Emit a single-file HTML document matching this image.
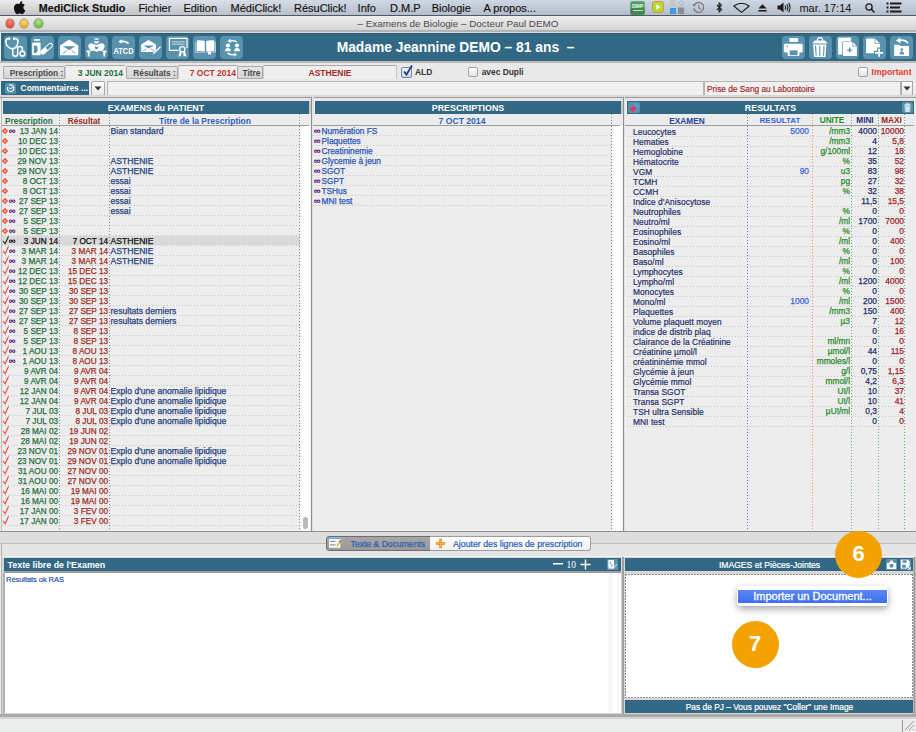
<!DOCTYPE html><html><head><meta charset="utf-8"><style>
*{margin:0;padding:0;box-sizing:border-box}
html,body{width:916px;height:732px;overflow:hidden}
body{position:relative;background:#ececec;font-family:"Liberation Sans",sans-serif;color:#000}
div{position:absolute;white-space:pre}
.t{-webkit-text-stroke:0.25px currentColor}
svg{position:absolute;overflow:visible}
</style></head><body><div style="left:0px;top:0px;width:916px;height:15px;background:linear-gradient(90deg,rgba(140,170,210,0) 0,rgba(140,170,210,0.1) 150px,rgba(140,170,210,0.3) 350px,rgba(140,170,210,0.32) 100%),linear-gradient(#ececec,#c6c6c6)"></div>
<div style="left:0px;top:15px;width:916px;height:1px;background:#505a66"></div>
<svg style="left:14px;top:1px" width="12" height="13" viewBox="0 0 12 13"><path d="M8.3 0.3c0.1 0.9-0.3 1.8-0.8 2.4-0.5 0.6-1.4 1.1-2.2 1-0.1-0.9 0.3-1.8 0.8-2.3 0.5-0.6 1.4-1.1 2.2-1.1zM11.3 9.4c-0.3 0.8-0.5 1.1-0.9 1.8-0.6 0.9-1.4 2-2.4 2-0.9 0-1.1-0.6-2.3-0.6-1.2 0-1.5 0.6-2.3 0.6-1 0-1.8-1-2.3-1.9C-0.3 8.800-0.4 6 0.6 4.5c0.7-1.1 1.800-1.700 2.800-1.700 1 0 1.700 0.600 2.500 0.600 0.800 0 1.300-0.600 2.500-0.600 0.900 0 1.800 0.500 2.500 1.300-2.200 1.200-1.800 4.300 0.400 5.300z" fill="#111"/></svg>
<div style="left:38.8px;top:0.5px;height:15px;line-height:15px;font-size:10.75px;font-weight:bold;color:#111;-webkit-text-stroke:0.15px #111">MediClick Studio</div>
<div style="left:138.4px;top:0.5px;height:15px;line-height:15px;font-size:11px;color:#111;-webkit-text-stroke:0.15px #111">Fichier</div>
<div style="left:183.4px;top:0.5px;height:15px;line-height:15px;font-size:11px;color:#111;-webkit-text-stroke:0.15px #111">Edition</div>
<div style="left:230.6px;top:0.5px;height:15px;line-height:15px;font-size:11px;color:#111;-webkit-text-stroke:0.15px #111">MédiClick!</div>
<div style="left:294px;top:0.5px;height:15px;line-height:15px;font-size:11px;color:#111;-webkit-text-stroke:0.15px #111">RésuClick!</div>
<div style="left:357.6px;top:0.5px;height:15px;line-height:15px;font-size:11px;color:#111;-webkit-text-stroke:0.15px #111">Info</div>
<div style="left:390px;top:0.5px;height:15px;line-height:15px;font-size:11px;color:#111;-webkit-text-stroke:0.15px #111">D.M.P</div>
<div style="left:431.7px;top:0.5px;height:15px;line-height:15px;font-size:11px;color:#111;-webkit-text-stroke:0.15px #111">Biologie</div>
<div style="left:483.4px;top:0.5px;height:15px;line-height:15px;font-size:11px;color:#111;-webkit-text-stroke:0.15px #111">A propos...</div>
<div style="left:799.4px;top:0.5px;height:15px;line-height:15px;font-size:11px;color:#111">mar. 17:14</div>
<div style="left:0px;top:16px;width:916px;height:17px;background:linear-gradient(#eeeeee,#d0d0d0)"></div>
<div style="left:0px;top:30px;width:916px;height:2px;background:#b4b4b4"></div>
<div style="left:0px;top:32px;width:916px;height:1px;background:#dadada"></div>
<div style="left:5.8px;top:19.3px;width:8.4px;height:8.4px;border-radius:50%;background:radial-gradient(circle at 50% 35%,#ff8a80,#d22a1f);box-shadow:0 0 0 0.5px #7a7a7a"></div>
<div style="left:20.1px;top:19.3px;width:8.4px;height:8.4px;border-radius:50%;background:radial-gradient(circle at 50% 35%,#ffd87a,#d99414);box-shadow:0 0 0 0.5px #7a7a7a"></div>
<div style="left:34.3px;top:19.3px;width:8.4px;height:8.4px;border-radius:50%;background:radial-gradient(circle at 50% 35%,#b6e88a,#4e9e26);box-shadow:0 0 0 0.5px #7a7a7a"></div>
<div style="left:357.6px;top:16px;height:16px;line-height:16px;font-size:9.85px;color:#4a4a4a">– Examens de Biologie – Docteur Paul DEMO</div>
<div style="left:0px;top:33px;width:916px;height:29px;background:#326883"></div>
<div style="left:0px;top:33px;width:1px;height:29px;background:#f0f0f0"></div>
<div style="left:1px;top:33px;width:915px;height:1px;background:#2c5d75"></div>
<div style="left:0px;top:61px;width:916px;height:2px;background:#b9b9b9"></div>
<div style="left:4px;top:36px;width:23px;height:23px;background:#5892ad;border-radius:4px"></div>
<div style="left:31px;top:36px;width:23px;height:23px;background:#5892ad;border-radius:4px"></div>
<div style="left:58px;top:36px;width:23px;height:23px;background:#5892ad;border-radius:4px"></div>
<div style="left:85px;top:36px;width:23px;height:23px;background:#5892ad;border-radius:4px"></div>
<div style="left:112px;top:36px;width:23px;height:23px;background:#5892ad;border-radius:4px"></div>
<div style="left:139px;top:36px;width:23px;height:23px;background:#5892ad;border-radius:4px"></div>
<div style="left:166px;top:36px;width:23px;height:23px;background:#5892ad;border-radius:4px"></div>
<div style="left:193px;top:36px;width:23px;height:23px;background:#5892ad;border-radius:4px"></div>
<div style="left:220px;top:36px;width:23px;height:23px;background:#5892ad;border-radius:4px"></div>
<div style="left:782px;top:36px;width:23px;height:23px;background:#5892ad;border-radius:4px"></div>
<div style="left:809px;top:36px;width:23px;height:23px;background:#5892ad;border-radius:4px"></div>
<div style="left:836px;top:36px;width:23px;height:23px;background:#5892ad;border-radius:4px"></div>
<div style="left:863px;top:36px;width:23px;height:23px;background:#5892ad;border-radius:4px"></div>
<div style="left:890px;top:36px;width:23px;height:23px;background:#5892ad;border-radius:4px"></div>
<div style="left:336.7px;top:33.5px;height:28px;line-height:28px;font-size:13.8px;font-weight:bold;color:#fff">Madame Jeannine DEMO – 81 ans  –</div>
<div style="left:0px;top:63px;width:916px;height:17px;background:#e9e9e9"></div>
<div style="left:3px;top:66px;width:62px;height:13px;background:linear-gradient(#e6e6e6,#d3d3d3);border:1px solid #a9a9a9;border-radius:1px"></div>
<div style="left:3px;top:67px;width:62px;height:13px;line-height:13px;text-align:center;font-size:8.3px;font-weight:bold;color:#4a4a4a;padding-left:5px">Prescription :</div>
<div style="left:65px;top:65px;width:60px;height:14px;background:#efefef;border-top:1px solid #a9a9a9;border-left:1px solid #cfcfcf"></div>
<div style="left:65px;top:66px;width:60px;height:14px;line-height:14px;text-align:right;font-size:8.5px;font-weight:bold;color:#23703c;padding-right:2px">3 JUN 2014</div>
<div style="left:126px;top:66px;width:52px;height:13px;background:linear-gradient(#e6e6e6,#d3d3d3);border:1px solid #a9a9a9;border-radius:1px"></div>
<div style="left:126px;top:67px;width:52px;height:13px;line-height:13px;text-align:center;font-size:8.3px;font-weight:bold;color:#4a4a4a;padding-left:5px">Résultats :</div>
<div style="left:178px;top:65px;width:59px;height:14px;background:#efefef;border-top:1px solid #a9a9a9;border-left:1px solid #cfcfcf"></div>
<div style="left:178px;top:66px;width:59px;height:14px;line-height:14px;text-align:right;font-size:8.5px;font-weight:bold;color:#c0302a;padding-right:1px">7 OCT 2014</div>
<div style="left:237px;top:66px;width:26px;height:13px;background:linear-gradient(#e6e6e6,#d3d3d3);border:1px solid #a9a9a9;border-radius:1px"></div>
<div style="left:237px;top:67px;width:26px;height:13px;line-height:13px;text-align:center;font-size:8.3px;font-weight:bold;color:#4a4a4a;padding-left:3px">Titre</div>
<div style="left:263px;top:65px;width:134px;height:14px;background:#efefef;border-top:1px solid #a9a9a9;border-left:1px solid #cfcfcf"></div>
<div style="left:263px;top:66px;width:134px;height:14px;line-height:14px;text-align:center;font-size:8.5px;font-weight:bold;color:#a52a1f;padding-right:0px">ASTHENIE</div>
<div style="left:396px;top:65px;width:1px;height:14px;background:#c4c4c4"></div>
<div style="left:401px;top:67px;width:11px;height:11px;background:linear-gradient(#f4f8fc,#c5d6e8);border:1px solid #6f88a8;border-radius:2px"></div>
<svg style="left:402px;top:64px" width="11" height="13" viewBox="0 0 11 13"><path d="M2 7.5 L4.5 10.5 L10 1.5" stroke="#1d3f7a" stroke-width="1.8" fill="none"/></svg>
<div style="left:415px;top:66px;height:14px;line-height:14px;font-size:8.4px;transform:translateY(-0.6px);font-weight:bold;color:#333">ALD</div>
<div style="left:468px;top:67px;width:10px;height:10px;background:linear-gradient(#fff,#e3e3e3);border:1px solid #a0a0a0;border-radius:2px"></div>
<div style="left:481.7px;top:66px;height:14px;line-height:14px;font-size:8.4px;transform:translateY(-0.6px);font-weight:bold;color:#333">avec Dupli</div>
<div style="left:858px;top:67px;width:10px;height:10px;background:linear-gradient(#fff,#e3e3e3);border:1px solid #a0a0a0;border-radius:2px"></div>
<div style="left:871.5px;top:66px;height:14px;line-height:14px;font-size:8.7px;transform:translateY(-0.6px);font-weight:bold;color:#ea3a2e">Important</div>
<div style="left:0px;top:80px;width:916px;height:17px;background:#ececec"></div>
<div style="left:1px;top:81px;width:88px;height:14px;background:#326883"></div>
<div style="left:5px;top:83px;width:11px;height:11px;background:#5892ad;border-radius:2px"></div>
<svg style="left:6px;top:84px" width="9" height="9" viewBox="0 0 9 9"><path d="M1.5 3 A3.3 3.3 0 1 0 3 1.3" stroke="#fff" stroke-width="1.1" fill="none"/><path d="M3 3.5 L4.5 5 L6.5 3" stroke="#fff" stroke-width="1" fill="none"/></svg>
<div style="left:20.6px;top:81px;height:15px;line-height:15px;font-size:8.4px;font-weight:bold;color:#fff">Commentaires ...</div>
<div style="left:91px;top:81px;width:14px;height:15px;background:linear-gradient(#fff,#e8e8e8);border:1px solid #a8a8a8;border-radius:2px"></div>
<svg style="left:94px;top:86px" width="8" height="5" viewBox="0 0 8 5"><path d="M0.5 0.5 L7.5 0.5 L4 4.5z" fill="#333"/></svg>
<div style="left:107px;top:81px;width:597px;height:15px;background:#f0f0f0;border:1px solid #b5b5b5;border-bottom-color:#dcdcdc"></div>
<div style="left:704px;top:81px;width:197px;height:15px;background:#f0f0f0;border:1px solid #b5b5b5;border-bottom-color:#dcdcdc"></div>
<div style="left:707px;top:82px;height:15px;line-height:15px;font-size:8.3px;color:#a2231d;-webkit-text-stroke:0.15px #a2231d">Prise de Sang au Laboratoire</div>
<div style="left:901px;top:81px;width:12px;height:15px;background:linear-gradient(#fff,#e8e8e8);border:1px solid #a8a8a8"></div>
<svg style="left:903px;top:86px" width="8" height="5" viewBox="0 0 8 5"><path d="M0.5 0.5 L7.5 0.5 L4 4.5z" fill="#333"/></svg>
<div style="left:0px;top:95px;width:916px;height:2px;background:#d8d8d8"></div>
<div style="left:0px;top:97px;width:916px;height:1px;background:#9c9c9c"></div>
<div style="left:0px;top:98px;width:916px;height:3px;background:#e6e6e6"></div>
<div style="left:311px;top:97px;width:1px;height:434px;background:#8e8e8e"></div>
<div style="left:312px;top:97px;width:2px;height:434px;background:#e0e0e0"></div>
<div style="left:623px;top:97px;width:1px;height:434px;background:#8e8e8e"></div>
<div style="left:624px;top:97px;width:1px;height:434px;background:#e0e0e0"></div>
<div style="left:309px;top:101px;width:2px;height:13px;background:#c9c9c9"></div>
<div style="left:621px;top:101px;width:2px;height:13px;background:#c9c9c9"></div>
<div style="left:1px;top:98px;width:1px;height:433px;background:#bcbcbc"></div>
<div style="left:0px;top:531px;width:916px;height:1px;background:#8f8f8f"></div>
<div style="left:3px;top:101px;width:306px;height:13px;background:#326883"></div>
<div style="left:3px;top:102px;width:306px;height:13px;line-height:13px;text-align:center;font-size:8.9px;font-weight:bold;color:#fff">EXAMENS du PATIENT</div>
<div style="left:2px;top:114px;width:307px;height:12px;background:#ececec;border-bottom:1px solid #9c9c9c"></div>
<div style="left:5px;top:116px;height:12px;line-height:12px;font-size:8.2px;font-weight:bold;color:#23703c">Prescription</div>
<div style="left:59px;top:116px;width:50px;height:12px;line-height:12px;text-align:center;font-size:8.25px;font-weight:bold;color:#9a2b22">Résultat</div>
<div style="left:110px;top:115.4px;width:190px;height:12px;line-height:12px;text-align:center;font-size:8.5px;font-weight:bold;color:#2f5fbf">Titre de la Prescription</div>
<div style="left:2px;top:126px;width:298px;height:405px;background:#ededed"></div>
<div style="left:300px;top:126px;width:11px;height:405px;background:linear-gradient(90deg,#f3f3f3,#fff 35%,#fff 80%,#f0f0f0)"></div>
<div style="left:303px;top:517px;width:5px;height:12px;background:#b9b9b9;border-radius:3px"></div>
<div style="left:2px;top:135px;width:298px;height:1px;background:repeating-linear-gradient(90deg,#c4c4c4 0 1px,transparent 1px 3px)"></div>
<svg style="left:2.3px;top:128.4px" width="6" height="6" viewBox="0 0 6 6"><path d="M3 0.9 L5.1 3 L3 5.1 L0.9 3z" stroke="#f0583c" stroke-width="1.5" fill="none"/></svg>
<svg style="left:9px;top:129px" width="8" height="5" viewBox="0 0 8 5"><path d="M3.2 2.2 C2.2 0.6 0.5 0.7 0.5 2.2 C0.5 3.7 2.2 3.8 3.2 2.2 C4.2 0.6 5.9 0.7 5.9 2.2 C5.9 3.7 4.2 3.8 3.2 2.2z" stroke="#5e3585" stroke-width="1.15" fill="none"/></svg>
<div style="left:5px;top:127px;width:53px;height:10px;line-height:10px;text-align:right;font-size:8.2px;color:#23703c;-webkit-text-stroke:0.25px #23703c">13 JAN 14</div>
<div style="left:110.5px;top:126.4px;height:10px;line-height:10px;font-size:8.6px;color:#24407e;-webkit-text-stroke:0.25px #24407e">Bian standard</div>
<div style="left:2px;top:145px;width:298px;height:1px;background:repeating-linear-gradient(90deg,#c4c4c4 0 1px,transparent 1px 3px)"></div>
<svg style="left:2.3px;top:138.4px" width="6" height="6" viewBox="0 0 6 6"><path d="M3 0.9 L5.1 3 L3 5.1 L0.9 3z" stroke="#f0583c" stroke-width="1.5" fill="none"/></svg>
<div style="left:5px;top:137px;width:53px;height:10px;line-height:10px;text-align:right;font-size:8.2px;color:#23703c;-webkit-text-stroke:0.25px #23703c">10 DEC 13</div>
<div style="left:2px;top:155px;width:298px;height:1px;background:repeating-linear-gradient(90deg,#c4c4c4 0 1px,transparent 1px 3px)"></div>
<svg style="left:2.3px;top:148.4px" width="6" height="6" viewBox="0 0 6 6"><path d="M3 0.9 L5.1 3 L3 5.1 L0.9 3z" stroke="#f0583c" stroke-width="1.5" fill="none"/></svg>
<div style="left:5px;top:147px;width:53px;height:10px;line-height:10px;text-align:right;font-size:8.2px;color:#23703c;-webkit-text-stroke:0.25px #23703c">10 DEC 13</div>
<div style="left:2px;top:165px;width:298px;height:1px;background:repeating-linear-gradient(90deg,#c4c4c4 0 1px,transparent 1px 3px)"></div>
<svg style="left:2.3px;top:158.4px" width="6" height="6" viewBox="0 0 6 6"><path d="M3 0.9 L5.1 3 L3 5.1 L0.9 3z" stroke="#f0583c" stroke-width="1.5" fill="none"/></svg>
<div style="left:5px;top:157px;width:53px;height:10px;line-height:10px;text-align:right;font-size:8.2px;color:#23703c;-webkit-text-stroke:0.25px #23703c">29 NOV 13</div>
<div style="left:110.5px;top:156.4px;height:10px;line-height:10px;font-size:8.6px;color:#24407e;-webkit-text-stroke:0.25px #24407e">ASTHENIE</div>
<div style="left:2px;top:175px;width:298px;height:1px;background:repeating-linear-gradient(90deg,#c4c4c4 0 1px,transparent 1px 3px)"></div>
<svg style="left:2.3px;top:168.4px" width="6" height="6" viewBox="0 0 6 6"><path d="M3 0.9 L5.1 3 L3 5.1 L0.9 3z" stroke="#f0583c" stroke-width="1.5" fill="none"/></svg>
<div style="left:5px;top:167px;width:53px;height:10px;line-height:10px;text-align:right;font-size:8.2px;color:#23703c;-webkit-text-stroke:0.25px #23703c">29 NOV 13</div>
<div style="left:110.5px;top:166.4px;height:10px;line-height:10px;font-size:8.6px;color:#24407e;-webkit-text-stroke:0.25px #24407e">ASTHENIE</div>
<div style="left:2px;top:185px;width:298px;height:1px;background:repeating-linear-gradient(90deg,#c4c4c4 0 1px,transparent 1px 3px)"></div>
<svg style="left:2.3px;top:178.4px" width="6" height="6" viewBox="0 0 6 6"><path d="M3 0.9 L5.1 3 L3 5.1 L0.9 3z" stroke="#f0583c" stroke-width="1.5" fill="none"/></svg>
<div style="left:5px;top:177px;width:53px;height:10px;line-height:10px;text-align:right;font-size:8.2px;color:#23703c;-webkit-text-stroke:0.25px #23703c">8 OCT 13</div>
<div style="left:110.5px;top:176.4px;height:10px;line-height:10px;font-size:8.6px;color:#24407e;-webkit-text-stroke:0.25px #24407e">essai</div>
<div style="left:2px;top:195px;width:298px;height:1px;background:repeating-linear-gradient(90deg,#c4c4c4 0 1px,transparent 1px 3px)"></div>
<svg style="left:2.3px;top:188.4px" width="6" height="6" viewBox="0 0 6 6"><path d="M3 0.9 L5.1 3 L3 5.1 L0.9 3z" stroke="#f0583c" stroke-width="1.5" fill="none"/></svg>
<div style="left:5px;top:187px;width:53px;height:10px;line-height:10px;text-align:right;font-size:8.2px;color:#23703c;-webkit-text-stroke:0.25px #23703c">8 OCT 13</div>
<div style="left:110.5px;top:186.4px;height:10px;line-height:10px;font-size:8.6px;color:#24407e;-webkit-text-stroke:0.25px #24407e">essai</div>
<div style="left:2px;top:205px;width:298px;height:1px;background:repeating-linear-gradient(90deg,#c4c4c4 0 1px,transparent 1px 3px)"></div>
<svg style="left:2.3px;top:198.4px" width="6" height="6" viewBox="0 0 6 6"><path d="M3 0.9 L5.1 3 L3 5.1 L0.9 3z" stroke="#f0583c" stroke-width="1.5" fill="none"/></svg>
<svg style="left:9px;top:199px" width="8" height="5" viewBox="0 0 8 5"><path d="M3.2 2.2 C2.2 0.6 0.5 0.7 0.5 2.2 C0.5 3.7 2.2 3.8 3.2 2.2 C4.2 0.6 5.9 0.7 5.9 2.2 C5.9 3.7 4.2 3.8 3.2 2.2z" stroke="#5e3585" stroke-width="1.15" fill="none"/></svg>
<div style="left:5px;top:197px;width:53px;height:10px;line-height:10px;text-align:right;font-size:8.2px;color:#23703c;-webkit-text-stroke:0.25px #23703c">27 SEP 13</div>
<div style="left:110.5px;top:196.4px;height:10px;line-height:10px;font-size:8.6px;color:#24407e;-webkit-text-stroke:0.25px #24407e">essai</div>
<div style="left:2px;top:215px;width:298px;height:1px;background:repeating-linear-gradient(90deg,#c4c4c4 0 1px,transparent 1px 3px)"></div>
<svg style="left:2.3px;top:208.4px" width="6" height="6" viewBox="0 0 6 6"><path d="M3 0.9 L5.1 3 L3 5.1 L0.9 3z" stroke="#f0583c" stroke-width="1.5" fill="none"/></svg>
<svg style="left:9px;top:209px" width="8" height="5" viewBox="0 0 8 5"><path d="M3.2 2.2 C2.2 0.6 0.5 0.7 0.5 2.2 C0.5 3.7 2.2 3.8 3.2 2.2 C4.2 0.6 5.9 0.7 5.9 2.2 C5.9 3.7 4.2 3.8 3.2 2.2z" stroke="#5e3585" stroke-width="1.15" fill="none"/></svg>
<div style="left:5px;top:207px;width:53px;height:10px;line-height:10px;text-align:right;font-size:8.2px;color:#23703c;-webkit-text-stroke:0.25px #23703c">27 SEP 13</div>
<div style="left:110.5px;top:206.4px;height:10px;line-height:10px;font-size:8.6px;color:#24407e;-webkit-text-stroke:0.25px #24407e">essai</div>
<div style="left:2px;top:225px;width:298px;height:1px;background:repeating-linear-gradient(90deg,#c4c4c4 0 1px,transparent 1px 3px)"></div>
<svg style="left:2.3px;top:218.4px" width="6" height="6" viewBox="0 0 6 6"><path d="M3 0.9 L5.1 3 L3 5.1 L0.9 3z" stroke="#f0583c" stroke-width="1.5" fill="none"/></svg>
<svg style="left:9px;top:219px" width="8" height="5" viewBox="0 0 8 5"><path d="M3.2 2.2 C2.2 0.6 0.5 0.7 0.5 2.2 C0.5 3.7 2.2 3.8 3.2 2.2 C4.2 0.6 5.9 0.7 5.9 2.2 C5.9 3.7 4.2 3.8 3.2 2.2z" stroke="#5e3585" stroke-width="1.15" fill="none"/></svg>
<div style="left:5px;top:217px;width:53px;height:10px;line-height:10px;text-align:right;font-size:8.2px;color:#23703c;-webkit-text-stroke:0.25px #23703c">5 SEP 13</div>
<div style="left:2px;top:235px;width:298px;height:1px;background:repeating-linear-gradient(90deg,#c4c4c4 0 1px,transparent 1px 3px)"></div>
<svg style="left:2.3px;top:228.4px" width="6" height="6" viewBox="0 0 6 6"><path d="M3 0.9 L5.1 3 L3 5.1 L0.9 3z" stroke="#f0583c" stroke-width="1.5" fill="none"/></svg>
<svg style="left:9px;top:229px" width="8" height="5" viewBox="0 0 8 5"><path d="M3.2 2.2 C2.2 0.6 0.5 0.7 0.5 2.2 C0.5 3.7 2.2 3.8 3.2 2.2 C4.2 0.6 5.9 0.7 5.9 2.2 C5.9 3.7 4.2 3.8 3.2 2.2z" stroke="#5e3585" stroke-width="1.15" fill="none"/></svg>
<div style="left:5px;top:227px;width:53px;height:10px;line-height:10px;text-align:right;font-size:8.2px;color:#23703c;-webkit-text-stroke:0.25px #23703c">5 SEP 13</div>
<div style="left:2px;top:236px;width:298px;height:9px;background:#d9d9d9"></div>
<div style="left:2px;top:245px;width:298px;height:1px;background:repeating-linear-gradient(90deg,#c4c4c4 0 1px,transparent 1px 3px)"></div>
<svg style="left:0px;top:236px" width="10" height="10" viewBox="0 0 10 10"><path d="M3 5 L5.1 7.8 L8.5 0.6" stroke="#222" stroke-width="1.1" fill="none"/></svg>
<svg style="left:9px;top:239px" width="8" height="5" viewBox="0 0 8 5"><path d="M3.2 2.2 C2.2 0.6 0.5 0.7 0.5 2.2 C0.5 3.7 2.2 3.8 3.2 2.2 C4.2 0.6 5.9 0.7 5.9 2.2 C5.9 3.7 4.2 3.8 3.2 2.2z" stroke="#222" stroke-width="1.15" fill="none"/></svg>
<div style="left:5px;top:237px;width:53px;height:10px;line-height:10px;text-align:right;font-size:8.2px;color:#111;-webkit-text-stroke:0.25px #111">3 JUN 14</div>
<div style="left:59px;top:237px;width:49px;height:10px;line-height:10px;text-align:right;font-size:8.2px;color:#111;-webkit-text-stroke:0.25px #111">7 OCT 14</div>
<div style="left:110.5px;top:236.4px;height:10px;line-height:10px;font-size:8.6px;color:#111;-webkit-text-stroke:0.25px #111">ASTHENIE</div>
<div style="left:2px;top:255px;width:298px;height:1px;background:repeating-linear-gradient(90deg,#c4c4c4 0 1px,transparent 1px 3px)"></div>
<svg style="left:0px;top:246px" width="10" height="10" viewBox="0 0 10 10"><path d="M3 5 L5.1 7.8 L8.5 0.6" stroke="#e5443a" stroke-width="1.1" fill="none"/></svg>
<svg style="left:9px;top:249px" width="8" height="5" viewBox="0 0 8 5"><path d="M3.2 2.2 C2.2 0.6 0.5 0.7 0.5 2.2 C0.5 3.7 2.2 3.8 3.2 2.2 C4.2 0.6 5.9 0.7 5.9 2.2 C5.9 3.7 4.2 3.8 3.2 2.2z" stroke="#5e3585" stroke-width="1.15" fill="none"/></svg>
<div style="left:5px;top:247px;width:53px;height:10px;line-height:10px;text-align:right;font-size:8.2px;color:#23703c;-webkit-text-stroke:0.25px #23703c">3 MAR 14</div>
<div style="left:59px;top:247px;width:49px;height:10px;line-height:10px;text-align:right;font-size:8.2px;color:#9e2d25;-webkit-text-stroke:0.25px #9e2d25">3 MAR 14</div>
<div style="left:110.5px;top:246.4px;height:10px;line-height:10px;font-size:8.6px;color:#24407e;-webkit-text-stroke:0.25px #24407e">ASTHENIE</div>
<div style="left:2px;top:265px;width:298px;height:1px;background:repeating-linear-gradient(90deg,#c4c4c4 0 1px,transparent 1px 3px)"></div>
<svg style="left:0px;top:256px" width="10" height="10" viewBox="0 0 10 10"><path d="M3 5 L5.1 7.8 L8.5 0.6" stroke="#e5443a" stroke-width="1.1" fill="none"/></svg>
<svg style="left:9px;top:259px" width="8" height="5" viewBox="0 0 8 5"><path d="M3.2 2.2 C2.2 0.6 0.5 0.7 0.5 2.2 C0.5 3.7 2.2 3.8 3.2 2.2 C4.2 0.6 5.9 0.7 5.9 2.2 C5.9 3.7 4.2 3.8 3.2 2.2z" stroke="#5e3585" stroke-width="1.15" fill="none"/></svg>
<div style="left:5px;top:257px;width:53px;height:10px;line-height:10px;text-align:right;font-size:8.2px;color:#23703c;-webkit-text-stroke:0.25px #23703c">3 MAR 14</div>
<div style="left:59px;top:257px;width:49px;height:10px;line-height:10px;text-align:right;font-size:8.2px;color:#9e2d25;-webkit-text-stroke:0.25px #9e2d25">3 MAR 14</div>
<div style="left:110.5px;top:256.4px;height:10px;line-height:10px;font-size:8.6px;color:#24407e;-webkit-text-stroke:0.25px #24407e">ASTHENIE</div>
<div style="left:2px;top:275px;width:298px;height:1px;background:repeating-linear-gradient(90deg,#c4c4c4 0 1px,transparent 1px 3px)"></div>
<svg style="left:0px;top:266px" width="10" height="10" viewBox="0 0 10 10"><path d="M3 5 L5.1 7.8 L8.5 0.6" stroke="#e5443a" stroke-width="1.1" fill="none"/></svg>
<svg style="left:9px;top:269px" width="8" height="5" viewBox="0 0 8 5"><path d="M3.2 2.2 C2.2 0.6 0.5 0.7 0.5 2.2 C0.5 3.7 2.2 3.8 3.2 2.2 C4.2 0.6 5.9 0.7 5.9 2.2 C5.9 3.7 4.2 3.8 3.2 2.2z" stroke="#5e3585" stroke-width="1.15" fill="none"/></svg>
<div style="left:5px;top:267px;width:53px;height:10px;line-height:10px;text-align:right;font-size:8.2px;color:#23703c;-webkit-text-stroke:0.25px #23703c">12 DEC 13</div>
<div style="left:59px;top:267px;width:49px;height:10px;line-height:10px;text-align:right;font-size:8.2px;color:#9e2d25;-webkit-text-stroke:0.25px #9e2d25">15 DEC 13</div>
<div style="left:2px;top:285px;width:298px;height:1px;background:repeating-linear-gradient(90deg,#c4c4c4 0 1px,transparent 1px 3px)"></div>
<svg style="left:0px;top:276px" width="10" height="10" viewBox="0 0 10 10"><path d="M3 5 L5.1 7.8 L8.5 0.6" stroke="#e5443a" stroke-width="1.1" fill="none"/></svg>
<svg style="left:9px;top:279px" width="8" height="5" viewBox="0 0 8 5"><path d="M3.2 2.2 C2.2 0.6 0.5 0.7 0.5 2.2 C0.5 3.7 2.2 3.8 3.2 2.2 C4.2 0.6 5.9 0.7 5.9 2.2 C5.9 3.7 4.2 3.8 3.2 2.2z" stroke="#5e3585" stroke-width="1.15" fill="none"/></svg>
<div style="left:5px;top:277px;width:53px;height:10px;line-height:10px;text-align:right;font-size:8.2px;color:#23703c;-webkit-text-stroke:0.25px #23703c">12 DEC 13</div>
<div style="left:59px;top:277px;width:49px;height:10px;line-height:10px;text-align:right;font-size:8.2px;color:#9e2d25;-webkit-text-stroke:0.25px #9e2d25">15 DEC 13</div>
<div style="left:2px;top:295px;width:298px;height:1px;background:repeating-linear-gradient(90deg,#c4c4c4 0 1px,transparent 1px 3px)"></div>
<svg style="left:0px;top:286px" width="10" height="10" viewBox="0 0 10 10"><path d="M3 5 L5.1 7.8 L8.5 0.6" stroke="#e5443a" stroke-width="1.1" fill="none"/></svg>
<svg style="left:9px;top:289px" width="8" height="5" viewBox="0 0 8 5"><path d="M3.2 2.2 C2.2 0.6 0.5 0.7 0.5 2.2 C0.5 3.7 2.2 3.8 3.2 2.2 C4.2 0.6 5.9 0.7 5.9 2.2 C5.9 3.7 4.2 3.8 3.2 2.2z" stroke="#5e3585" stroke-width="1.15" fill="none"/></svg>
<div style="left:5px;top:287px;width:53px;height:10px;line-height:10px;text-align:right;font-size:8.2px;color:#23703c;-webkit-text-stroke:0.25px #23703c">30 SEP 13</div>
<div style="left:59px;top:287px;width:49px;height:10px;line-height:10px;text-align:right;font-size:8.2px;color:#9e2d25;-webkit-text-stroke:0.25px #9e2d25">30 SEP 13</div>
<div style="left:2px;top:305px;width:298px;height:1px;background:repeating-linear-gradient(90deg,#c4c4c4 0 1px,transparent 1px 3px)"></div>
<svg style="left:0px;top:296px" width="10" height="10" viewBox="0 0 10 10"><path d="M3 5 L5.1 7.8 L8.5 0.6" stroke="#e5443a" stroke-width="1.1" fill="none"/></svg>
<svg style="left:9px;top:299px" width="8" height="5" viewBox="0 0 8 5"><path d="M3.2 2.2 C2.2 0.6 0.5 0.7 0.5 2.2 C0.5 3.7 2.2 3.8 3.2 2.2 C4.2 0.6 5.9 0.7 5.9 2.2 C5.9 3.7 4.2 3.8 3.2 2.2z" stroke="#5e3585" stroke-width="1.15" fill="none"/></svg>
<div style="left:5px;top:297px;width:53px;height:10px;line-height:10px;text-align:right;font-size:8.2px;color:#23703c;-webkit-text-stroke:0.25px #23703c">30 SEP 13</div>
<div style="left:59px;top:297px;width:49px;height:10px;line-height:10px;text-align:right;font-size:8.2px;color:#9e2d25;-webkit-text-stroke:0.25px #9e2d25">30 SEP 13</div>
<div style="left:2px;top:315px;width:298px;height:1px;background:repeating-linear-gradient(90deg,#c4c4c4 0 1px,transparent 1px 3px)"></div>
<svg style="left:0px;top:306px" width="10" height="10" viewBox="0 0 10 10"><path d="M3 5 L5.1 7.8 L8.5 0.6" stroke="#e5443a" stroke-width="1.1" fill="none"/></svg>
<svg style="left:9px;top:309px" width="8" height="5" viewBox="0 0 8 5"><path d="M3.2 2.2 C2.2 0.6 0.5 0.7 0.5 2.2 C0.5 3.7 2.2 3.8 3.2 2.2 C4.2 0.6 5.9 0.7 5.9 2.2 C5.9 3.7 4.2 3.8 3.2 2.2z" stroke="#5e3585" stroke-width="1.15" fill="none"/></svg>
<div style="left:5px;top:307px;width:53px;height:10px;line-height:10px;text-align:right;font-size:8.2px;color:#23703c;-webkit-text-stroke:0.25px #23703c">27 SEP 13</div>
<div style="left:59px;top:307px;width:49px;height:10px;line-height:10px;text-align:right;font-size:8.2px;color:#9e2d25;-webkit-text-stroke:0.25px #9e2d25">27 SEP 13</div>
<div style="left:110.5px;top:306.4px;height:10px;line-height:10px;font-size:8.6px;color:#24407e;-webkit-text-stroke:0.25px #24407e">resultats derniers</div>
<div style="left:2px;top:325px;width:298px;height:1px;background:repeating-linear-gradient(90deg,#c4c4c4 0 1px,transparent 1px 3px)"></div>
<svg style="left:0px;top:316px" width="10" height="10" viewBox="0 0 10 10"><path d="M3 5 L5.1 7.8 L8.5 0.6" stroke="#e5443a" stroke-width="1.1" fill="none"/></svg>
<svg style="left:9px;top:319px" width="8" height="5" viewBox="0 0 8 5"><path d="M3.2 2.2 C2.2 0.6 0.5 0.7 0.5 2.2 C0.5 3.7 2.2 3.8 3.2 2.2 C4.2 0.6 5.9 0.7 5.9 2.2 C5.9 3.7 4.2 3.8 3.2 2.2z" stroke="#5e3585" stroke-width="1.15" fill="none"/></svg>
<div style="left:5px;top:317px;width:53px;height:10px;line-height:10px;text-align:right;font-size:8.2px;color:#23703c;-webkit-text-stroke:0.25px #23703c">27 SEP 13</div>
<div style="left:59px;top:317px;width:49px;height:10px;line-height:10px;text-align:right;font-size:8.2px;color:#9e2d25;-webkit-text-stroke:0.25px #9e2d25">27 SEP 13</div>
<div style="left:110.5px;top:316.4px;height:10px;line-height:10px;font-size:8.6px;color:#24407e;-webkit-text-stroke:0.25px #24407e">resultats derniers</div>
<div style="left:2px;top:335px;width:298px;height:1px;background:repeating-linear-gradient(90deg,#c4c4c4 0 1px,transparent 1px 3px)"></div>
<svg style="left:0px;top:326px" width="10" height="10" viewBox="0 0 10 10"><path d="M3 5 L5.1 7.8 L8.5 0.6" stroke="#e5443a" stroke-width="1.1" fill="none"/></svg>
<svg style="left:9px;top:329px" width="8" height="5" viewBox="0 0 8 5"><path d="M3.2 2.2 C2.2 0.6 0.5 0.7 0.5 2.2 C0.5 3.7 2.2 3.8 3.2 2.2 C4.2 0.6 5.9 0.7 5.9 2.2 C5.9 3.7 4.2 3.8 3.2 2.2z" stroke="#5e3585" stroke-width="1.15" fill="none"/></svg>
<div style="left:5px;top:327px;width:53px;height:10px;line-height:10px;text-align:right;font-size:8.2px;color:#23703c;-webkit-text-stroke:0.25px #23703c">5 SEP 13</div>
<div style="left:59px;top:327px;width:49px;height:10px;line-height:10px;text-align:right;font-size:8.2px;color:#9e2d25;-webkit-text-stroke:0.25px #9e2d25">8 SEP 13</div>
<div style="left:2px;top:345px;width:298px;height:1px;background:repeating-linear-gradient(90deg,#c4c4c4 0 1px,transparent 1px 3px)"></div>
<svg style="left:0px;top:336px" width="10" height="10" viewBox="0 0 10 10"><path d="M3 5 L5.1 7.8 L8.5 0.6" stroke="#e5443a" stroke-width="1.1" fill="none"/></svg>
<svg style="left:9px;top:339px" width="8" height="5" viewBox="0 0 8 5"><path d="M3.2 2.2 C2.2 0.6 0.5 0.7 0.5 2.2 C0.5 3.7 2.2 3.8 3.2 2.2 C4.2 0.6 5.9 0.7 5.9 2.2 C5.9 3.7 4.2 3.8 3.2 2.2z" stroke="#5e3585" stroke-width="1.15" fill="none"/></svg>
<div style="left:5px;top:337px;width:53px;height:10px;line-height:10px;text-align:right;font-size:8.2px;color:#23703c;-webkit-text-stroke:0.25px #23703c">5 SEP 13</div>
<div style="left:59px;top:337px;width:49px;height:10px;line-height:10px;text-align:right;font-size:8.2px;color:#9e2d25;-webkit-text-stroke:0.25px #9e2d25">8 SEP 13</div>
<div style="left:2px;top:355px;width:298px;height:1px;background:repeating-linear-gradient(90deg,#c4c4c4 0 1px,transparent 1px 3px)"></div>
<svg style="left:0px;top:346px" width="10" height="10" viewBox="0 0 10 10"><path d="M3 5 L5.1 7.8 L8.5 0.6" stroke="#e5443a" stroke-width="1.1" fill="none"/></svg>
<svg style="left:9px;top:349px" width="8" height="5" viewBox="0 0 8 5"><path d="M3.2 2.2 C2.2 0.6 0.5 0.7 0.5 2.2 C0.5 3.7 2.2 3.8 3.2 2.2 C4.2 0.6 5.9 0.7 5.9 2.2 C5.9 3.7 4.2 3.8 3.2 2.2z" stroke="#5e3585" stroke-width="1.15" fill="none"/></svg>
<div style="left:5px;top:347px;width:53px;height:10px;line-height:10px;text-align:right;font-size:8.2px;color:#23703c;-webkit-text-stroke:0.25px #23703c">1 AOU 13</div>
<div style="left:59px;top:347px;width:49px;height:10px;line-height:10px;text-align:right;font-size:8.2px;color:#9e2d25;-webkit-text-stroke:0.25px #9e2d25">8 AOU 13</div>
<div style="left:2px;top:365px;width:298px;height:1px;background:repeating-linear-gradient(90deg,#c4c4c4 0 1px,transparent 1px 3px)"></div>
<svg style="left:0px;top:356px" width="10" height="10" viewBox="0 0 10 10"><path d="M3 5 L5.1 7.8 L8.5 0.6" stroke="#e5443a" stroke-width="1.1" fill="none"/></svg>
<svg style="left:9px;top:359px" width="8" height="5" viewBox="0 0 8 5"><path d="M3.2 2.2 C2.2 0.6 0.5 0.7 0.5 2.2 C0.5 3.7 2.2 3.8 3.2 2.2 C4.2 0.6 5.9 0.7 5.9 2.2 C5.9 3.7 4.2 3.8 3.2 2.2z" stroke="#5e3585" stroke-width="1.15" fill="none"/></svg>
<div style="left:5px;top:357px;width:53px;height:10px;line-height:10px;text-align:right;font-size:8.2px;color:#23703c;-webkit-text-stroke:0.25px #23703c">1 AOU 13</div>
<div style="left:59px;top:357px;width:49px;height:10px;line-height:10px;text-align:right;font-size:8.2px;color:#9e2d25;-webkit-text-stroke:0.25px #9e2d25">8 AOU 13</div>
<div style="left:2px;top:375px;width:298px;height:1px;background:repeating-linear-gradient(90deg,#c4c4c4 0 1px,transparent 1px 3px)"></div>
<svg style="left:0px;top:366px" width="10" height="10" viewBox="0 0 10 10"><path d="M3 5 L5.1 7.8 L8.5 0.6" stroke="#e5443a" stroke-width="1.1" fill="none"/></svg>
<div style="left:5px;top:367px;width:53px;height:10px;line-height:10px;text-align:right;font-size:8.2px;color:#23703c;-webkit-text-stroke:0.25px #23703c">9 AVR 04</div>
<div style="left:59px;top:367px;width:49px;height:10px;line-height:10px;text-align:right;font-size:8.2px;color:#9e2d25;-webkit-text-stroke:0.25px #9e2d25">9 AVR 04</div>
<div style="left:2px;top:385px;width:298px;height:1px;background:repeating-linear-gradient(90deg,#c4c4c4 0 1px,transparent 1px 3px)"></div>
<svg style="left:0px;top:376px" width="10" height="10" viewBox="0 0 10 10"><path d="M3 5 L5.1 7.8 L8.5 0.6" stroke="#e5443a" stroke-width="1.1" fill="none"/></svg>
<div style="left:5px;top:377px;width:53px;height:10px;line-height:10px;text-align:right;font-size:8.2px;color:#23703c;-webkit-text-stroke:0.25px #23703c">9 AVR 04</div>
<div style="left:59px;top:377px;width:49px;height:10px;line-height:10px;text-align:right;font-size:8.2px;color:#9e2d25;-webkit-text-stroke:0.25px #9e2d25">9 AVR 04</div>
<div style="left:2px;top:395px;width:298px;height:1px;background:repeating-linear-gradient(90deg,#c4c4c4 0 1px,transparent 1px 3px)"></div>
<svg style="left:0px;top:386px" width="10" height="10" viewBox="0 0 10 10"><path d="M3 5 L5.1 7.8 L8.5 0.6" stroke="#e5443a" stroke-width="1.1" fill="none"/></svg>
<div style="left:5px;top:387px;width:53px;height:10px;line-height:10px;text-align:right;font-size:8.2px;color:#23703c;-webkit-text-stroke:0.25px #23703c">12 JAN 04</div>
<div style="left:59px;top:387px;width:49px;height:10px;line-height:10px;text-align:right;font-size:8.2px;color:#9e2d25;-webkit-text-stroke:0.25px #9e2d25">9 AVR 04</div>
<div style="left:110.5px;top:386.4px;height:10px;line-height:10px;font-size:8.6px;color:#24407e;-webkit-text-stroke:0.25px #24407e">Explo d&#x27;une anomalie lipidique</div>
<div style="left:2px;top:405px;width:298px;height:1px;background:repeating-linear-gradient(90deg,#c4c4c4 0 1px,transparent 1px 3px)"></div>
<svg style="left:0px;top:396px" width="10" height="10" viewBox="0 0 10 10"><path d="M3 5 L5.1 7.8 L8.5 0.6" stroke="#e5443a" stroke-width="1.1" fill="none"/></svg>
<div style="left:5px;top:397px;width:53px;height:10px;line-height:10px;text-align:right;font-size:8.2px;color:#23703c;-webkit-text-stroke:0.25px #23703c">12 JAN 04</div>
<div style="left:59px;top:397px;width:49px;height:10px;line-height:10px;text-align:right;font-size:8.2px;color:#9e2d25;-webkit-text-stroke:0.25px #9e2d25">9 AVR 04</div>
<div style="left:110.5px;top:396.4px;height:10px;line-height:10px;font-size:8.6px;color:#24407e;-webkit-text-stroke:0.25px #24407e">Explo d&#x27;une anomalie lipidique</div>
<div style="left:2px;top:415px;width:298px;height:1px;background:repeating-linear-gradient(90deg,#c4c4c4 0 1px,transparent 1px 3px)"></div>
<svg style="left:0px;top:406px" width="10" height="10" viewBox="0 0 10 10"><path d="M3 5 L5.1 7.8 L8.5 0.6" stroke="#e5443a" stroke-width="1.1" fill="none"/></svg>
<div style="left:5px;top:407px;width:53px;height:10px;line-height:10px;text-align:right;font-size:8.2px;color:#23703c;-webkit-text-stroke:0.25px #23703c">7 JUL 03</div>
<div style="left:59px;top:407px;width:49px;height:10px;line-height:10px;text-align:right;font-size:8.2px;color:#9e2d25;-webkit-text-stroke:0.25px #9e2d25">8 JUL 03</div>
<div style="left:110.5px;top:406.4px;height:10px;line-height:10px;font-size:8.6px;color:#24407e;-webkit-text-stroke:0.25px #24407e">Explo d&#x27;une anomalie lipidique</div>
<div style="left:2px;top:425px;width:298px;height:1px;background:repeating-linear-gradient(90deg,#c4c4c4 0 1px,transparent 1px 3px)"></div>
<svg style="left:0px;top:416px" width="10" height="10" viewBox="0 0 10 10"><path d="M3 5 L5.1 7.8 L8.5 0.6" stroke="#e5443a" stroke-width="1.1" fill="none"/></svg>
<div style="left:5px;top:417px;width:53px;height:10px;line-height:10px;text-align:right;font-size:8.2px;color:#23703c;-webkit-text-stroke:0.25px #23703c">7 JUL 03</div>
<div style="left:59px;top:417px;width:49px;height:10px;line-height:10px;text-align:right;font-size:8.2px;color:#9e2d25;-webkit-text-stroke:0.25px #9e2d25">8 JUL 03</div>
<div style="left:110.5px;top:416.4px;height:10px;line-height:10px;font-size:8.6px;color:#24407e;-webkit-text-stroke:0.25px #24407e">Explo d&#x27;une anomalie lipidique</div>
<div style="left:2px;top:435px;width:298px;height:1px;background:repeating-linear-gradient(90deg,#c4c4c4 0 1px,transparent 1px 3px)"></div>
<svg style="left:0px;top:426px" width="10" height="10" viewBox="0 0 10 10"><path d="M3 5 L5.1 7.8 L8.5 0.6" stroke="#e5443a" stroke-width="1.1" fill="none"/></svg>
<div style="left:5px;top:427px;width:53px;height:10px;line-height:10px;text-align:right;font-size:8.2px;color:#23703c;-webkit-text-stroke:0.25px #23703c">28 MAI 02</div>
<div style="left:59px;top:427px;width:49px;height:10px;line-height:10px;text-align:right;font-size:8.2px;color:#9e2d25;-webkit-text-stroke:0.25px #9e2d25">19 JUN 02</div>
<div style="left:2px;top:445px;width:298px;height:1px;background:repeating-linear-gradient(90deg,#c4c4c4 0 1px,transparent 1px 3px)"></div>
<svg style="left:0px;top:436px" width="10" height="10" viewBox="0 0 10 10"><path d="M3 5 L5.1 7.8 L8.5 0.6" stroke="#e5443a" stroke-width="1.1" fill="none"/></svg>
<div style="left:5px;top:437px;width:53px;height:10px;line-height:10px;text-align:right;font-size:8.2px;color:#23703c;-webkit-text-stroke:0.25px #23703c">28 MAI 02</div>
<div style="left:59px;top:437px;width:49px;height:10px;line-height:10px;text-align:right;font-size:8.2px;color:#9e2d25;-webkit-text-stroke:0.25px #9e2d25">19 JUN 02</div>
<div style="left:2px;top:455px;width:298px;height:1px;background:repeating-linear-gradient(90deg,#c4c4c4 0 1px,transparent 1px 3px)"></div>
<svg style="left:0px;top:446px" width="10" height="10" viewBox="0 0 10 10"><path d="M3 5 L5.1 7.8 L8.5 0.6" stroke="#e5443a" stroke-width="1.1" fill="none"/></svg>
<div style="left:5px;top:447px;width:53px;height:10px;line-height:10px;text-align:right;font-size:8.2px;color:#23703c;-webkit-text-stroke:0.25px #23703c">23 NOV 01</div>
<div style="left:59px;top:447px;width:49px;height:10px;line-height:10px;text-align:right;font-size:8.2px;color:#9e2d25;-webkit-text-stroke:0.25px #9e2d25">29 NOV 01</div>
<div style="left:110.5px;top:446.4px;height:10px;line-height:10px;font-size:8.6px;color:#24407e;-webkit-text-stroke:0.25px #24407e">Explo d&#x27;une anomalie lipidique</div>
<div style="left:2px;top:465px;width:298px;height:1px;background:repeating-linear-gradient(90deg,#c4c4c4 0 1px,transparent 1px 3px)"></div>
<svg style="left:0px;top:456px" width="10" height="10" viewBox="0 0 10 10"><path d="M3 5 L5.1 7.8 L8.5 0.6" stroke="#e5443a" stroke-width="1.1" fill="none"/></svg>
<div style="left:5px;top:457px;width:53px;height:10px;line-height:10px;text-align:right;font-size:8.2px;color:#23703c;-webkit-text-stroke:0.25px #23703c">23 NOV 01</div>
<div style="left:59px;top:457px;width:49px;height:10px;line-height:10px;text-align:right;font-size:8.2px;color:#9e2d25;-webkit-text-stroke:0.25px #9e2d25">29 NOV 01</div>
<div style="left:110.5px;top:456.4px;height:10px;line-height:10px;font-size:8.6px;color:#24407e;-webkit-text-stroke:0.25px #24407e">Explo d&#x27;une anomalie lipidique</div>
<div style="left:2px;top:475px;width:298px;height:1px;background:repeating-linear-gradient(90deg,#c4c4c4 0 1px,transparent 1px 3px)"></div>
<svg style="left:0px;top:466px" width="10" height="10" viewBox="0 0 10 10"><path d="M3 5 L5.1 7.8 L8.5 0.6" stroke="#e5443a" stroke-width="1.1" fill="none"/></svg>
<div style="left:5px;top:467px;width:53px;height:10px;line-height:10px;text-align:right;font-size:8.2px;color:#23703c;-webkit-text-stroke:0.25px #23703c">31 AOU 00</div>
<div style="left:59px;top:467px;width:49px;height:10px;line-height:10px;text-align:right;font-size:8.2px;color:#9e2d25;-webkit-text-stroke:0.25px #9e2d25">27 NOV 00</div>
<div style="left:2px;top:485px;width:298px;height:1px;background:repeating-linear-gradient(90deg,#c4c4c4 0 1px,transparent 1px 3px)"></div>
<svg style="left:0px;top:476px" width="10" height="10" viewBox="0 0 10 10"><path d="M3 5 L5.1 7.8 L8.5 0.6" stroke="#e5443a" stroke-width="1.1" fill="none"/></svg>
<div style="left:5px;top:477px;width:53px;height:10px;line-height:10px;text-align:right;font-size:8.2px;color:#23703c;-webkit-text-stroke:0.25px #23703c">31 AOU 00</div>
<div style="left:59px;top:477px;width:49px;height:10px;line-height:10px;text-align:right;font-size:8.2px;color:#9e2d25;-webkit-text-stroke:0.25px #9e2d25">27 NOV 00</div>
<div style="left:2px;top:495px;width:298px;height:1px;background:repeating-linear-gradient(90deg,#c4c4c4 0 1px,transparent 1px 3px)"></div>
<svg style="left:0px;top:486px" width="10" height="10" viewBox="0 0 10 10"><path d="M3 5 L5.1 7.8 L8.5 0.6" stroke="#e5443a" stroke-width="1.1" fill="none"/></svg>
<div style="left:5px;top:487px;width:53px;height:10px;line-height:10px;text-align:right;font-size:8.2px;color:#23703c;-webkit-text-stroke:0.25px #23703c">16 MAI 00</div>
<div style="left:59px;top:487px;width:49px;height:10px;line-height:10px;text-align:right;font-size:8.2px;color:#9e2d25;-webkit-text-stroke:0.25px #9e2d25">19 MAI 00</div>
<div style="left:2px;top:505px;width:298px;height:1px;background:repeating-linear-gradient(90deg,#c4c4c4 0 1px,transparent 1px 3px)"></div>
<svg style="left:0px;top:496px" width="10" height="10" viewBox="0 0 10 10"><path d="M3 5 L5.1 7.8 L8.5 0.6" stroke="#e5443a" stroke-width="1.1" fill="none"/></svg>
<div style="left:5px;top:497px;width:53px;height:10px;line-height:10px;text-align:right;font-size:8.2px;color:#23703c;-webkit-text-stroke:0.25px #23703c">16 MAI 00</div>
<div style="left:59px;top:497px;width:49px;height:10px;line-height:10px;text-align:right;font-size:8.2px;color:#9e2d25;-webkit-text-stroke:0.25px #9e2d25">19 MAI 00</div>
<div style="left:2px;top:515px;width:298px;height:1px;background:repeating-linear-gradient(90deg,#c4c4c4 0 1px,transparent 1px 3px)"></div>
<svg style="left:0px;top:506px" width="10" height="10" viewBox="0 0 10 10"><path d="M3 5 L5.1 7.8 L8.5 0.6" stroke="#e5443a" stroke-width="1.1" fill="none"/></svg>
<div style="left:5px;top:507px;width:53px;height:10px;line-height:10px;text-align:right;font-size:8.2px;color:#23703c;-webkit-text-stroke:0.25px #23703c">17 JAN 00</div>
<div style="left:59px;top:507px;width:49px;height:10px;line-height:10px;text-align:right;font-size:8.2px;color:#9e2d25;-webkit-text-stroke:0.25px #9e2d25">3 FEV 00</div>
<div style="left:2px;top:525px;width:298px;height:1px;background:repeating-linear-gradient(90deg,#c4c4c4 0 1px,transparent 1px 3px)"></div>
<svg style="left:0px;top:516px" width="10" height="10" viewBox="0 0 10 10"><path d="M3 5 L5.1 7.8 L8.5 0.6" stroke="#e5443a" stroke-width="1.1" fill="none"/></svg>
<div style="left:5px;top:517px;width:53px;height:10px;line-height:10px;text-align:right;font-size:8.2px;color:#23703c;-webkit-text-stroke:0.25px #23703c">17 JAN 00</div>
<div style="left:59px;top:517px;width:49px;height:10px;line-height:10px;text-align:right;font-size:8.2px;color:#9e2d25;-webkit-text-stroke:0.25px #9e2d25">3 FEV 00</div>
<div style="left:59px;top:114px;width:1px;height:417px;background:repeating-linear-gradient(180deg,#8c8c8c 0 1px,transparent 1px 3px)"></div>
<div style="left:109px;top:114px;width:1px;height:417px;background:repeating-linear-gradient(180deg,#8c8c8c 0 1px,transparent 1px 3px)"></div>
<div style="left:299px;top:114px;width:1px;height:417px;background:repeating-linear-gradient(180deg,#8c8c8c 0 1px,transparent 1px 3px)"></div>
<div style="left:315px;top:101px;width:306px;height:13px;background:#326883"></div>
<div style="left:315px;top:102px;width:306px;height:13px;line-height:13px;text-align:center;font-size:8.9px;font-weight:bold;color:#fff">PRESCRIPTIONS</div>
<div style="left:313px;top:114px;width:307px;height:12px;background:#ececec;border-bottom:1px solid #9c9c9c"></div>
<div style="left:313px;top:115.3px;width:298px;height:12px;line-height:12px;text-align:center;font-size:8.6px;font-weight:bold;color:#2f5fbf">7 OCT 2014</div>
<div style="left:313px;top:126px;width:298px;height:405px;background:#ededed"></div>
<div style="left:612px;top:126px;width:11px;height:405px;background:linear-gradient(90deg,#f3f3f3,#fff 35%,#fff 80%,#f0f0f0)"></div>
<div style="left:313px;top:135px;width:298px;height:1px;background:repeating-linear-gradient(90deg,#c4c4c4 0 1px,transparent 1px 3px)"></div>
<svg style="left:314px;top:128.6px" width="8" height="5" viewBox="0 0 8 5"><path d="M3.2 2.2 C2.2 0.6 0.5 0.7 0.5 2.2 C0.5 3.7 2.2 3.8 3.2 2.2 C4.2 0.6 5.9 0.7 5.9 2.2 C5.9 3.7 4.2 3.8 3.2 2.2z" stroke="#6a3a8a" stroke-width="1.2" fill="none"/></svg>
<div style="left:321.5px;top:126.4px;height:10px;line-height:10px;font-size:8.3px;color:#2a55b5;-webkit-text-stroke:0.25px #2a55b5">Numération FS</div>
<div style="left:313px;top:145px;width:298px;height:1px;background:repeating-linear-gradient(90deg,#c4c4c4 0 1px,transparent 1px 3px)"></div>
<svg style="left:314px;top:138.6px" width="8" height="5" viewBox="0 0 8 5"><path d="M3.2 2.2 C2.2 0.6 0.5 0.7 0.5 2.2 C0.5 3.7 2.2 3.8 3.2 2.2 C4.2 0.6 5.9 0.7 5.9 2.2 C5.9 3.7 4.2 3.8 3.2 2.2z" stroke="#6a3a8a" stroke-width="1.2" fill="none"/></svg>
<div style="left:321.5px;top:136.4px;height:10px;line-height:10px;font-size:8.3px;color:#2a55b5;-webkit-text-stroke:0.25px #2a55b5">Plaquettes</div>
<div style="left:313px;top:155px;width:298px;height:1px;background:repeating-linear-gradient(90deg,#c4c4c4 0 1px,transparent 1px 3px)"></div>
<svg style="left:314px;top:148.6px" width="8" height="5" viewBox="0 0 8 5"><path d="M3.2 2.2 C2.2 0.6 0.5 0.7 0.5 2.2 C0.5 3.7 2.2 3.8 3.2 2.2 C4.2 0.6 5.9 0.7 5.9 2.2 C5.9 3.7 4.2 3.8 3.2 2.2z" stroke="#6a3a8a" stroke-width="1.2" fill="none"/></svg>
<div style="left:321.5px;top:146.4px;height:10px;line-height:10px;font-size:8.3px;color:#2a55b5;-webkit-text-stroke:0.25px #2a55b5">Creatininemie</div>
<div style="left:313px;top:165px;width:298px;height:1px;background:repeating-linear-gradient(90deg,#c4c4c4 0 1px,transparent 1px 3px)"></div>
<svg style="left:314px;top:158.6px" width="8" height="5" viewBox="0 0 8 5"><path d="M3.2 2.2 C2.2 0.6 0.5 0.7 0.5 2.2 C0.5 3.7 2.2 3.8 3.2 2.2 C4.2 0.6 5.9 0.7 5.9 2.2 C5.9 3.7 4.2 3.8 3.2 2.2z" stroke="#6a3a8a" stroke-width="1.2" fill="none"/></svg>
<div style="left:321.5px;top:156.4px;height:10px;line-height:10px;font-size:8.3px;color:#2a55b5;-webkit-text-stroke:0.25px #2a55b5">Glycemie à jeun</div>
<div style="left:313px;top:175px;width:298px;height:1px;background:repeating-linear-gradient(90deg,#c4c4c4 0 1px,transparent 1px 3px)"></div>
<svg style="left:314px;top:168.6px" width="8" height="5" viewBox="0 0 8 5"><path d="M3.2 2.2 C2.2 0.6 0.5 0.7 0.5 2.2 C0.5 3.7 2.2 3.8 3.2 2.2 C4.2 0.6 5.9 0.7 5.9 2.2 C5.9 3.7 4.2 3.8 3.2 2.2z" stroke="#6a3a8a" stroke-width="1.2" fill="none"/></svg>
<div style="left:321.5px;top:166.4px;height:10px;line-height:10px;font-size:8.3px;color:#2a55b5;-webkit-text-stroke:0.25px #2a55b5">SGOT</div>
<div style="left:313px;top:185px;width:298px;height:1px;background:repeating-linear-gradient(90deg,#c4c4c4 0 1px,transparent 1px 3px)"></div>
<svg style="left:314px;top:178.6px" width="8" height="5" viewBox="0 0 8 5"><path d="M3.2 2.2 C2.2 0.6 0.5 0.7 0.5 2.2 C0.5 3.7 2.2 3.8 3.2 2.2 C4.2 0.6 5.9 0.7 5.9 2.2 C5.9 3.7 4.2 3.8 3.2 2.2z" stroke="#6a3a8a" stroke-width="1.2" fill="none"/></svg>
<div style="left:321.5px;top:176.4px;height:10px;line-height:10px;font-size:8.3px;color:#2a55b5;-webkit-text-stroke:0.25px #2a55b5">SGPT</div>
<div style="left:313px;top:195px;width:298px;height:1px;background:repeating-linear-gradient(90deg,#c4c4c4 0 1px,transparent 1px 3px)"></div>
<svg style="left:314px;top:188.6px" width="8" height="5" viewBox="0 0 8 5"><path d="M3.2 2.2 C2.2 0.6 0.5 0.7 0.5 2.2 C0.5 3.7 2.2 3.8 3.2 2.2 C4.2 0.6 5.9 0.7 5.9 2.2 C5.9 3.7 4.2 3.8 3.2 2.2z" stroke="#6a3a8a" stroke-width="1.2" fill="none"/></svg>
<div style="left:321.5px;top:186.4px;height:10px;line-height:10px;font-size:8.3px;color:#2a55b5;-webkit-text-stroke:0.25px #2a55b5">TSHus</div>
<div style="left:313px;top:205px;width:298px;height:1px;background:repeating-linear-gradient(90deg,#c4c4c4 0 1px,transparent 1px 3px)"></div>
<svg style="left:314px;top:198.6px" width="8" height="5" viewBox="0 0 8 5"><path d="M3.2 2.2 C2.2 0.6 0.5 0.7 0.5 2.2 C0.5 3.7 2.2 3.8 3.2 2.2 C4.2 0.6 5.9 0.7 5.9 2.2 C5.9 3.7 4.2 3.8 3.2 2.2z" stroke="#6a3a8a" stroke-width="1.2" fill="none"/></svg>
<div style="left:321.5px;top:196.4px;height:10px;line-height:10px;font-size:8.3px;color:#2a55b5;-webkit-text-stroke:0.25px #2a55b5">MNI test</div>
<div style="left:611px;top:114px;width:1px;height:417px;background:repeating-linear-gradient(180deg,#888 0 1px,transparent 1px 3px)"></div>
<div style="left:627px;top:101px;width:287px;height:13px;background:#326883"></div>
<div style="left:627px;top:102px;width:287px;height:13px;line-height:13px;text-align:center;font-size:8.9px;font-weight:bold;color:#fff">RESULTATS</div>
<div style="left:628px;top:102px;width:12px;height:11px;background:#5892ad;border-radius:2px"></div>
<svg style="left:629px;top:103px" width="10" height="9" viewBox="0 0 10 9"><path d="M0.8 6.2 L5.8 1.2 L8.8 4.2 L3.8 9.2z" fill="#ea2f6b"/><path d="M5.8 1.2 L6.8 0.2 L9.8 3.2 L8.8 4.2z" fill="#2fb9ea"/><path d="M4.8 2.2 L6.8 0.2 L9.8 3.2 L7.8 5.2z" fill="#2fb0e6"/></svg>
<div style="left:902px;top:102px;width:11px;height:11px;background:#5892ad;border-radius:2px"></div>
<svg style="left:903px;top:103px" width="9" height="9" viewBox="0 0 9 9"><path d="M1.5 1.8 H7.5 M3.3 1.8 V0.8 H5.7 V1.8 M2 2.8 L2.5 8.5 H6.5 L7 2.8z M3.5 3.5 V7.8 M4.5 3.5 V7.8 M5.5 3.5 V7.8" stroke="#fff" stroke-width="0.8" fill="none"/></svg>
<div style="left:625px;top:114px;width:289px;height:12px;background:#ececec;border-bottom:1px solid #9c9c9c"></div>
<div style="left:625px;top:126px;width:289px;height:405px;background:#ededed"></div>
<div style="left:627px;top:115.3px;width:120px;height:12px;line-height:12px;text-align:center;font-size:8.3px;font-weight:bold;color:#2443a0">EXAMEN</div>
<div style="left:748px;top:115.3px;width:64px;height:12px;line-height:12px;text-align:center;font-size:8.0px;font-weight:bold;color:#3b62d6">RESULTAT</div>
<div style="left:813px;top:115.3px;width:38px;height:12px;line-height:12px;text-align:center;font-size:8.2px;font-weight:bold;color:#1f8a2a">UNITE</div>
<div style="left:852px;top:115.3px;width:26px;height:12px;line-height:12px;text-align:center;font-size:8.2px;font-weight:bold;color:#1d2e78">MINI</div>
<div style="left:879px;top:115.3px;width:25px;height:12px;line-height:12px;text-align:center;font-size:8.2px;font-weight:bold;color:#a21e2c">MAXI</div>
<div style="left:627px;top:136px;width:278px;height:1px;background:repeating-linear-gradient(90deg,#c4c4c4 0 1px,transparent 1px 3px)"></div>
<div style="left:633px;top:126px;height:10px;line-height:10px;transform:translateY(0.5px);font-size:8.35px;letter-spacing:0.07px;color:#1d2e6a;-webkit-text-stroke:0.2px #1d2e6a">Leucocytes</div>
<div style="left:748px;top:126px;width:61px;height:10px;line-height:10px;text-align:right;font-size:8.4px;color:#3b62d6;-webkit-text-stroke:0.25px #3b62d6">5000</div>
<div style="left:813px;top:126px;width:37px;height:10px;line-height:10px;overflow:hidden;display:flex;justify-content:flex-end;font-size:8.3px;color:#2a8a2a;-webkit-text-stroke:0.25px #2a8a2a"><span style="flex:none">/mm3</span></div>
<div style="left:852px;top:126px;width:25px;height:10px;line-height:10px;text-align:right;font-size:8.4px;color:#1d2e6a;-webkit-text-stroke:0.25px #1d2e6a">4000</div>
<div style="left:879px;top:126px;width:25px;height:10px;line-height:10px;text-align:right;font-size:8.4px;color:#a21e2c;-webkit-text-stroke:0.25px #a21e2c">10000</div>
<div style="left:627px;top:146px;width:278px;height:1px;background:repeating-linear-gradient(90deg,#c4c4c4 0 1px,transparent 1px 3px)"></div>
<div style="left:633px;top:136px;height:10px;line-height:10px;transform:translateY(0.5px);font-size:8.35px;letter-spacing:0.07px;color:#1d2e6a;-webkit-text-stroke:0.2px #1d2e6a">Hematies</div>
<div style="left:813px;top:136px;width:37px;height:10px;line-height:10px;overflow:hidden;display:flex;justify-content:flex-end;font-size:8.3px;color:#2a8a2a;-webkit-text-stroke:0.25px #2a8a2a"><span style="flex:none">/mm3</span></div>
<div style="left:852px;top:136px;width:25px;height:10px;line-height:10px;text-align:right;font-size:8.4px;color:#1d2e6a;-webkit-text-stroke:0.25px #1d2e6a">4</div>
<div style="left:879px;top:136px;width:25px;height:10px;line-height:10px;text-align:right;font-size:8.4px;color:#a21e2c;-webkit-text-stroke:0.25px #a21e2c">5,8</div>
<div style="left:627px;top:156px;width:278px;height:1px;background:repeating-linear-gradient(90deg,#c4c4c4 0 1px,transparent 1px 3px)"></div>
<div style="left:633px;top:146px;height:10px;line-height:10px;transform:translateY(0.5px);font-size:8.35px;letter-spacing:0.07px;color:#1d2e6a;-webkit-text-stroke:0.2px #1d2e6a">Hemoglobine</div>
<div style="left:813px;top:146px;width:37px;height:10px;line-height:10px;overflow:hidden;display:flex;justify-content:flex-end;font-size:8.3px;color:#2a8a2a;-webkit-text-stroke:0.25px #2a8a2a"><span style="flex:none">g/100ml</span></div>
<div style="left:852px;top:146px;width:25px;height:10px;line-height:10px;text-align:right;font-size:8.4px;color:#1d2e6a;-webkit-text-stroke:0.25px #1d2e6a">12</div>
<div style="left:879px;top:146px;width:25px;height:10px;line-height:10px;text-align:right;font-size:8.4px;color:#a21e2c;-webkit-text-stroke:0.25px #a21e2c">18</div>
<div style="left:627px;top:166px;width:278px;height:1px;background:repeating-linear-gradient(90deg,#c4c4c4 0 1px,transparent 1px 3px)"></div>
<div style="left:633px;top:156px;height:10px;line-height:10px;transform:translateY(0.5px);font-size:8.35px;letter-spacing:0.07px;color:#1d2e6a;-webkit-text-stroke:0.2px #1d2e6a">Hématocrite</div>
<div style="left:813px;top:156px;width:37px;height:10px;line-height:10px;overflow:hidden;display:flex;justify-content:flex-end;font-size:8.3px;color:#2a8a2a;-webkit-text-stroke:0.25px #2a8a2a"><span style="flex:none">%</span></div>
<div style="left:852px;top:156px;width:25px;height:10px;line-height:10px;text-align:right;font-size:8.4px;color:#1d2e6a;-webkit-text-stroke:0.25px #1d2e6a">35</div>
<div style="left:879px;top:156px;width:25px;height:10px;line-height:10px;text-align:right;font-size:8.4px;color:#a21e2c;-webkit-text-stroke:0.25px #a21e2c">52</div>
<div style="left:627px;top:176px;width:278px;height:1px;background:repeating-linear-gradient(90deg,#c4c4c4 0 1px,transparent 1px 3px)"></div>
<div style="left:633px;top:166px;height:10px;line-height:10px;transform:translateY(0.5px);font-size:8.35px;letter-spacing:0.07px;color:#1d2e6a;-webkit-text-stroke:0.2px #1d2e6a">VGM</div>
<div style="left:748px;top:166px;width:61px;height:10px;line-height:10px;text-align:right;font-size:8.4px;color:#3b62d6;-webkit-text-stroke:0.25px #3b62d6">90</div>
<div style="left:813px;top:166px;width:37px;height:10px;line-height:10px;overflow:hidden;display:flex;justify-content:flex-end;font-size:8.3px;color:#2a8a2a;-webkit-text-stroke:0.25px #2a8a2a"><span style="flex:none">u3</span></div>
<div style="left:852px;top:166px;width:25px;height:10px;line-height:10px;text-align:right;font-size:8.4px;color:#1d2e6a;-webkit-text-stroke:0.25px #1d2e6a">83</div>
<div style="left:879px;top:166px;width:25px;height:10px;line-height:10px;text-align:right;font-size:8.4px;color:#a21e2c;-webkit-text-stroke:0.25px #a21e2c">98</div>
<div style="left:627px;top:186px;width:278px;height:1px;background:repeating-linear-gradient(90deg,#c4c4c4 0 1px,transparent 1px 3px)"></div>
<div style="left:633px;top:176px;height:10px;line-height:10px;transform:translateY(0.5px);font-size:8.35px;letter-spacing:0.07px;color:#1d2e6a;-webkit-text-stroke:0.2px #1d2e6a">TCMH</div>
<div style="left:813px;top:176px;width:37px;height:10px;line-height:10px;overflow:hidden;display:flex;justify-content:flex-end;font-size:8.3px;color:#2a8a2a;-webkit-text-stroke:0.25px #2a8a2a"><span style="flex:none">pg</span></div>
<div style="left:852px;top:176px;width:25px;height:10px;line-height:10px;text-align:right;font-size:8.4px;color:#1d2e6a;-webkit-text-stroke:0.25px #1d2e6a">27</div>
<div style="left:879px;top:176px;width:25px;height:10px;line-height:10px;text-align:right;font-size:8.4px;color:#a21e2c;-webkit-text-stroke:0.25px #a21e2c">32</div>
<div style="left:627px;top:196px;width:278px;height:1px;background:repeating-linear-gradient(90deg,#c4c4c4 0 1px,transparent 1px 3px)"></div>
<div style="left:633px;top:186px;height:10px;line-height:10px;transform:translateY(0.5px);font-size:8.35px;letter-spacing:0.07px;color:#1d2e6a;-webkit-text-stroke:0.2px #1d2e6a">CCMH</div>
<div style="left:813px;top:186px;width:37px;height:10px;line-height:10px;overflow:hidden;display:flex;justify-content:flex-end;font-size:8.3px;color:#2a8a2a;-webkit-text-stroke:0.25px #2a8a2a"><span style="flex:none">%</span></div>
<div style="left:852px;top:186px;width:25px;height:10px;line-height:10px;text-align:right;font-size:8.4px;color:#1d2e6a;-webkit-text-stroke:0.25px #1d2e6a">32</div>
<div style="left:879px;top:186px;width:25px;height:10px;line-height:10px;text-align:right;font-size:8.4px;color:#a21e2c;-webkit-text-stroke:0.25px #a21e2c">38</div>
<div style="left:627px;top:206px;width:278px;height:1px;background:repeating-linear-gradient(90deg,#c4c4c4 0 1px,transparent 1px 3px)"></div>
<div style="left:633px;top:196px;height:10px;line-height:10px;transform:translateY(0.5px);font-size:8.35px;letter-spacing:0.07px;color:#1d2e6a;-webkit-text-stroke:0.2px #1d2e6a">Indice d&#x27;Anisocytose</div>
<div style="left:852px;top:196px;width:25px;height:10px;line-height:10px;text-align:right;font-size:8.4px;color:#1d2e6a;-webkit-text-stroke:0.25px #1d2e6a">11,5</div>
<div style="left:879px;top:196px;width:25px;height:10px;line-height:10px;text-align:right;font-size:8.4px;color:#a21e2c;-webkit-text-stroke:0.25px #a21e2c">15,5</div>
<div style="left:627px;top:216px;width:278px;height:1px;background:repeating-linear-gradient(90deg,#c4c4c4 0 1px,transparent 1px 3px)"></div>
<div style="left:633px;top:206px;height:10px;line-height:10px;transform:translateY(0.5px);font-size:8.35px;letter-spacing:0.07px;color:#1d2e6a;-webkit-text-stroke:0.2px #1d2e6a">Neutrophiles</div>
<div style="left:813px;top:206px;width:37px;height:10px;line-height:10px;overflow:hidden;display:flex;justify-content:flex-end;font-size:8.3px;color:#2a8a2a;-webkit-text-stroke:0.25px #2a8a2a"><span style="flex:none">%</span></div>
<div style="left:852px;top:206px;width:25px;height:10px;line-height:10px;text-align:right;font-size:8.4px;color:#1d2e6a;-webkit-text-stroke:0.25px #1d2e6a">0</div>
<div style="left:879px;top:206px;width:25px;height:10px;line-height:10px;text-align:right;font-size:8.4px;color:#a21e2c;-webkit-text-stroke:0.25px #a21e2c">0</div>
<div style="left:627px;top:226px;width:278px;height:1px;background:repeating-linear-gradient(90deg,#c4c4c4 0 1px,transparent 1px 3px)"></div>
<div style="left:633px;top:216px;height:10px;line-height:10px;transform:translateY(0.5px);font-size:8.35px;letter-spacing:0.07px;color:#1d2e6a;-webkit-text-stroke:0.2px #1d2e6a">Neutro/ml</div>
<div style="left:813px;top:216px;width:37px;height:10px;line-height:10px;overflow:hidden;display:flex;justify-content:flex-end;font-size:8.3px;color:#2a8a2a;-webkit-text-stroke:0.25px #2a8a2a"><span style="flex:none">/ml</span></div>
<div style="left:852px;top:216px;width:25px;height:10px;line-height:10px;text-align:right;font-size:8.4px;color:#1d2e6a;-webkit-text-stroke:0.25px #1d2e6a">1700</div>
<div style="left:879px;top:216px;width:25px;height:10px;line-height:10px;text-align:right;font-size:8.4px;color:#a21e2c;-webkit-text-stroke:0.25px #a21e2c">7000</div>
<div style="left:627px;top:236px;width:278px;height:1px;background:repeating-linear-gradient(90deg,#c4c4c4 0 1px,transparent 1px 3px)"></div>
<div style="left:633px;top:226px;height:10px;line-height:10px;transform:translateY(0.5px);font-size:8.35px;letter-spacing:0.07px;color:#1d2e6a;-webkit-text-stroke:0.2px #1d2e6a">Eosinophiles</div>
<div style="left:813px;top:226px;width:37px;height:10px;line-height:10px;overflow:hidden;display:flex;justify-content:flex-end;font-size:8.3px;color:#2a8a2a;-webkit-text-stroke:0.25px #2a8a2a"><span style="flex:none">%</span></div>
<div style="left:852px;top:226px;width:25px;height:10px;line-height:10px;text-align:right;font-size:8.4px;color:#1d2e6a;-webkit-text-stroke:0.25px #1d2e6a">0</div>
<div style="left:879px;top:226px;width:25px;height:10px;line-height:10px;text-align:right;font-size:8.4px;color:#a21e2c;-webkit-text-stroke:0.25px #a21e2c">0</div>
<div style="left:627px;top:246px;width:278px;height:1px;background:repeating-linear-gradient(90deg,#c4c4c4 0 1px,transparent 1px 3px)"></div>
<div style="left:633px;top:236px;height:10px;line-height:10px;transform:translateY(0.5px);font-size:8.35px;letter-spacing:0.07px;color:#1d2e6a;-webkit-text-stroke:0.2px #1d2e6a">Eosino/ml</div>
<div style="left:813px;top:236px;width:37px;height:10px;line-height:10px;overflow:hidden;display:flex;justify-content:flex-end;font-size:8.3px;color:#2a8a2a;-webkit-text-stroke:0.25px #2a8a2a"><span style="flex:none">/ml</span></div>
<div style="left:852px;top:236px;width:25px;height:10px;line-height:10px;text-align:right;font-size:8.4px;color:#1d2e6a;-webkit-text-stroke:0.25px #1d2e6a">0</div>
<div style="left:879px;top:236px;width:25px;height:10px;line-height:10px;text-align:right;font-size:8.4px;color:#a21e2c;-webkit-text-stroke:0.25px #a21e2c">400</div>
<div style="left:627px;top:256px;width:278px;height:1px;background:repeating-linear-gradient(90deg,#c4c4c4 0 1px,transparent 1px 3px)"></div>
<div style="left:633px;top:246px;height:10px;line-height:10px;transform:translateY(0.5px);font-size:8.35px;letter-spacing:0.07px;color:#1d2e6a;-webkit-text-stroke:0.2px #1d2e6a">Basophiles</div>
<div style="left:813px;top:246px;width:37px;height:10px;line-height:10px;overflow:hidden;display:flex;justify-content:flex-end;font-size:8.3px;color:#2a8a2a;-webkit-text-stroke:0.25px #2a8a2a"><span style="flex:none">%</span></div>
<div style="left:852px;top:246px;width:25px;height:10px;line-height:10px;text-align:right;font-size:8.4px;color:#1d2e6a;-webkit-text-stroke:0.25px #1d2e6a">0</div>
<div style="left:879px;top:246px;width:25px;height:10px;line-height:10px;text-align:right;font-size:8.4px;color:#a21e2c;-webkit-text-stroke:0.25px #a21e2c">0</div>
<div style="left:627px;top:266px;width:278px;height:1px;background:repeating-linear-gradient(90deg,#c4c4c4 0 1px,transparent 1px 3px)"></div>
<div style="left:633px;top:256px;height:10px;line-height:10px;transform:translateY(0.5px);font-size:8.35px;letter-spacing:0.07px;color:#1d2e6a;-webkit-text-stroke:0.2px #1d2e6a">Baso/ml</div>
<div style="left:813px;top:256px;width:37px;height:10px;line-height:10px;overflow:hidden;display:flex;justify-content:flex-end;font-size:8.3px;color:#2a8a2a;-webkit-text-stroke:0.25px #2a8a2a"><span style="flex:none">/ml</span></div>
<div style="left:852px;top:256px;width:25px;height:10px;line-height:10px;text-align:right;font-size:8.4px;color:#1d2e6a;-webkit-text-stroke:0.25px #1d2e6a">0</div>
<div style="left:879px;top:256px;width:25px;height:10px;line-height:10px;text-align:right;font-size:8.4px;color:#a21e2c;-webkit-text-stroke:0.25px #a21e2c">100</div>
<div style="left:627px;top:276px;width:278px;height:1px;background:repeating-linear-gradient(90deg,#c4c4c4 0 1px,transparent 1px 3px)"></div>
<div style="left:633px;top:266px;height:10px;line-height:10px;transform:translateY(0.5px);font-size:8.35px;letter-spacing:0.07px;color:#1d2e6a;-webkit-text-stroke:0.2px #1d2e6a">Lymphocytes</div>
<div style="left:813px;top:266px;width:37px;height:10px;line-height:10px;overflow:hidden;display:flex;justify-content:flex-end;font-size:8.3px;color:#2a8a2a;-webkit-text-stroke:0.25px #2a8a2a"><span style="flex:none">%</span></div>
<div style="left:852px;top:266px;width:25px;height:10px;line-height:10px;text-align:right;font-size:8.4px;color:#1d2e6a;-webkit-text-stroke:0.25px #1d2e6a">0</div>
<div style="left:879px;top:266px;width:25px;height:10px;line-height:10px;text-align:right;font-size:8.4px;color:#a21e2c;-webkit-text-stroke:0.25px #a21e2c">0</div>
<div style="left:627px;top:286px;width:278px;height:1px;background:repeating-linear-gradient(90deg,#c4c4c4 0 1px,transparent 1px 3px)"></div>
<div style="left:633px;top:276px;height:10px;line-height:10px;transform:translateY(0.5px);font-size:8.35px;letter-spacing:0.07px;color:#1d2e6a;-webkit-text-stroke:0.2px #1d2e6a">Lympho/ml</div>
<div style="left:813px;top:276px;width:37px;height:10px;line-height:10px;overflow:hidden;display:flex;justify-content:flex-end;font-size:8.3px;color:#2a8a2a;-webkit-text-stroke:0.25px #2a8a2a"><span style="flex:none">/ml</span></div>
<div style="left:852px;top:276px;width:25px;height:10px;line-height:10px;text-align:right;font-size:8.4px;color:#1d2e6a;-webkit-text-stroke:0.25px #1d2e6a">1200</div>
<div style="left:879px;top:276px;width:25px;height:10px;line-height:10px;text-align:right;font-size:8.4px;color:#a21e2c;-webkit-text-stroke:0.25px #a21e2c">4000</div>
<div style="left:627px;top:296px;width:278px;height:1px;background:repeating-linear-gradient(90deg,#c4c4c4 0 1px,transparent 1px 3px)"></div>
<div style="left:633px;top:286px;height:10px;line-height:10px;transform:translateY(0.5px);font-size:8.35px;letter-spacing:0.07px;color:#1d2e6a;-webkit-text-stroke:0.2px #1d2e6a">Monocytes</div>
<div style="left:813px;top:286px;width:37px;height:10px;line-height:10px;overflow:hidden;display:flex;justify-content:flex-end;font-size:8.3px;color:#2a8a2a;-webkit-text-stroke:0.25px #2a8a2a"><span style="flex:none">%</span></div>
<div style="left:852px;top:286px;width:25px;height:10px;line-height:10px;text-align:right;font-size:8.4px;color:#1d2e6a;-webkit-text-stroke:0.25px #1d2e6a">0</div>
<div style="left:879px;top:286px;width:25px;height:10px;line-height:10px;text-align:right;font-size:8.4px;color:#a21e2c;-webkit-text-stroke:0.25px #a21e2c">0</div>
<div style="left:627px;top:306px;width:278px;height:1px;background:repeating-linear-gradient(90deg,#c4c4c4 0 1px,transparent 1px 3px)"></div>
<div style="left:633px;top:296px;height:10px;line-height:10px;transform:translateY(0.5px);font-size:8.35px;letter-spacing:0.07px;color:#1d2e6a;-webkit-text-stroke:0.2px #1d2e6a">Mono/ml</div>
<div style="left:748px;top:296px;width:61px;height:10px;line-height:10px;text-align:right;font-size:8.4px;color:#3b62d6;-webkit-text-stroke:0.25px #3b62d6">1000</div>
<div style="left:813px;top:296px;width:37px;height:10px;line-height:10px;overflow:hidden;display:flex;justify-content:flex-end;font-size:8.3px;color:#2a8a2a;-webkit-text-stroke:0.25px #2a8a2a"><span style="flex:none">/ml</span></div>
<div style="left:852px;top:296px;width:25px;height:10px;line-height:10px;text-align:right;font-size:8.4px;color:#1d2e6a;-webkit-text-stroke:0.25px #1d2e6a">200</div>
<div style="left:879px;top:296px;width:25px;height:10px;line-height:10px;text-align:right;font-size:8.4px;color:#a21e2c;-webkit-text-stroke:0.25px #a21e2c">1500</div>
<div style="left:627px;top:316px;width:278px;height:1px;background:repeating-linear-gradient(90deg,#c4c4c4 0 1px,transparent 1px 3px)"></div>
<div style="left:633px;top:306px;height:10px;line-height:10px;transform:translateY(0.5px);font-size:8.35px;letter-spacing:0.07px;color:#1d2e6a;-webkit-text-stroke:0.2px #1d2e6a">Plaquettes</div>
<div style="left:813px;top:306px;width:37px;height:10px;line-height:10px;overflow:hidden;display:flex;justify-content:flex-end;font-size:8.3px;color:#2a8a2a;-webkit-text-stroke:0.25px #2a8a2a"><span style="flex:none">/mm3</span></div>
<div style="left:852px;top:306px;width:25px;height:10px;line-height:10px;text-align:right;font-size:8.4px;color:#1d2e6a;-webkit-text-stroke:0.25px #1d2e6a">150</div>
<div style="left:879px;top:306px;width:25px;height:10px;line-height:10px;text-align:right;font-size:8.4px;color:#a21e2c;-webkit-text-stroke:0.25px #a21e2c">400</div>
<div style="left:627px;top:326px;width:278px;height:1px;background:repeating-linear-gradient(90deg,#c4c4c4 0 1px,transparent 1px 3px)"></div>
<div style="left:633px;top:316px;height:10px;line-height:10px;transform:translateY(0.5px);font-size:8.35px;letter-spacing:0.07px;color:#1d2e6a;-webkit-text-stroke:0.2px #1d2e6a">Volume plaquett moyen</div>
<div style="left:813px;top:316px;width:37px;height:10px;line-height:10px;overflow:hidden;display:flex;justify-content:flex-end;font-size:8.3px;color:#2a8a2a;-webkit-text-stroke:0.25px #2a8a2a"><span style="flex:none">µ3</span></div>
<div style="left:852px;top:316px;width:25px;height:10px;line-height:10px;text-align:right;font-size:8.4px;color:#1d2e6a;-webkit-text-stroke:0.25px #1d2e6a">7</div>
<div style="left:879px;top:316px;width:25px;height:10px;line-height:10px;text-align:right;font-size:8.4px;color:#a21e2c;-webkit-text-stroke:0.25px #a21e2c">12</div>
<div style="left:627px;top:336px;width:278px;height:1px;background:repeating-linear-gradient(90deg,#c4c4c4 0 1px,transparent 1px 3px)"></div>
<div style="left:633px;top:326px;height:10px;line-height:10px;transform:translateY(0.5px);font-size:8.35px;letter-spacing:0.07px;color:#1d2e6a;-webkit-text-stroke:0.2px #1d2e6a">indice de distrib plaq</div>
<div style="left:852px;top:326px;width:25px;height:10px;line-height:10px;text-align:right;font-size:8.4px;color:#1d2e6a;-webkit-text-stroke:0.25px #1d2e6a">0</div>
<div style="left:879px;top:326px;width:25px;height:10px;line-height:10px;text-align:right;font-size:8.4px;color:#a21e2c;-webkit-text-stroke:0.25px #a21e2c">16</div>
<div style="left:627px;top:346px;width:278px;height:1px;background:repeating-linear-gradient(90deg,#c4c4c4 0 1px,transparent 1px 3px)"></div>
<div style="left:633px;top:336px;height:10px;line-height:10px;transform:translateY(0.5px);font-size:8.35px;letter-spacing:0.07px;color:#1d2e6a;-webkit-text-stroke:0.2px #1d2e6a">Clairance de la Créatinine</div>
<div style="left:813px;top:336px;width:37px;height:10px;line-height:10px;overflow:hidden;display:flex;justify-content:flex-end;font-size:8.3px;color:#2a8a2a;-webkit-text-stroke:0.25px #2a8a2a"><span style="flex:none">ml/mn</span></div>
<div style="left:852px;top:336px;width:25px;height:10px;line-height:10px;text-align:right;font-size:8.4px;color:#1d2e6a;-webkit-text-stroke:0.25px #1d2e6a">0</div>
<div style="left:879px;top:336px;width:25px;height:10px;line-height:10px;text-align:right;font-size:8.4px;color:#a21e2c;-webkit-text-stroke:0.25px #a21e2c">0</div>
<div style="left:627px;top:356px;width:278px;height:1px;background:repeating-linear-gradient(90deg,#c4c4c4 0 1px,transparent 1px 3px)"></div>
<div style="left:633px;top:346px;height:10px;line-height:10px;transform:translateY(0.5px);font-size:8.35px;letter-spacing:0.07px;color:#1d2e6a;-webkit-text-stroke:0.2px #1d2e6a">Créatinine µmol/l</div>
<div style="left:813px;top:346px;width:37px;height:10px;line-height:10px;overflow:hidden;display:flex;justify-content:flex-end;font-size:8.3px;color:#2a8a2a;-webkit-text-stroke:0.25px #2a8a2a"><span style="flex:none">µmol/l</span></div>
<div style="left:852px;top:346px;width:25px;height:10px;line-height:10px;text-align:right;font-size:8.4px;color:#1d2e6a;-webkit-text-stroke:0.25px #1d2e6a">44</div>
<div style="left:879px;top:346px;width:25px;height:10px;line-height:10px;text-align:right;font-size:8.4px;color:#a21e2c;-webkit-text-stroke:0.25px #a21e2c">115</div>
<div style="left:627px;top:366px;width:278px;height:1px;background:repeating-linear-gradient(90deg,#c4c4c4 0 1px,transparent 1px 3px)"></div>
<div style="left:633px;top:356px;height:10px;line-height:10px;transform:translateY(0.5px);font-size:8.35px;letter-spacing:0.07px;color:#1d2e6a;-webkit-text-stroke:0.2px #1d2e6a">créatininémie mmol</div>
<div style="left:813px;top:356px;width:37px;height:10px;line-height:10px;overflow:hidden;display:flex;justify-content:flex-end;font-size:8.3px;color:#2a8a2a;-webkit-text-stroke:0.25px #2a8a2a"><span style="flex:none">mmoles/l</span></div>
<div style="left:852px;top:356px;width:25px;height:10px;line-height:10px;text-align:right;font-size:8.4px;color:#1d2e6a;-webkit-text-stroke:0.25px #1d2e6a">0</div>
<div style="left:879px;top:356px;width:25px;height:10px;line-height:10px;text-align:right;font-size:8.4px;color:#a21e2c;-webkit-text-stroke:0.25px #a21e2c">0</div>
<div style="left:627px;top:376px;width:278px;height:1px;background:repeating-linear-gradient(90deg,#c4c4c4 0 1px,transparent 1px 3px)"></div>
<div style="left:633px;top:366px;height:10px;line-height:10px;transform:translateY(0.5px);font-size:8.35px;letter-spacing:0.07px;color:#1d2e6a;-webkit-text-stroke:0.2px #1d2e6a">Glycémie à jeun</div>
<div style="left:813px;top:366px;width:37px;height:10px;line-height:10px;overflow:hidden;display:flex;justify-content:flex-end;font-size:8.3px;color:#2a8a2a;-webkit-text-stroke:0.25px #2a8a2a"><span style="flex:none">g/l</span></div>
<div style="left:852px;top:366px;width:25px;height:10px;line-height:10px;text-align:right;font-size:8.4px;color:#1d2e6a;-webkit-text-stroke:0.25px #1d2e6a">0,75</div>
<div style="left:879px;top:366px;width:25px;height:10px;line-height:10px;text-align:right;font-size:8.4px;color:#a21e2c;-webkit-text-stroke:0.25px #a21e2c">1,15</div>
<div style="left:627px;top:386px;width:278px;height:1px;background:repeating-linear-gradient(90deg,#c4c4c4 0 1px,transparent 1px 3px)"></div>
<div style="left:633px;top:376px;height:10px;line-height:10px;transform:translateY(0.5px);font-size:8.35px;letter-spacing:0.07px;color:#1d2e6a;-webkit-text-stroke:0.2px #1d2e6a">Glycémie mmol</div>
<div style="left:813px;top:376px;width:37px;height:10px;line-height:10px;overflow:hidden;display:flex;justify-content:flex-end;font-size:8.3px;color:#2a8a2a;-webkit-text-stroke:0.25px #2a8a2a"><span style="flex:none">mmol/l</span></div>
<div style="left:852px;top:376px;width:25px;height:10px;line-height:10px;text-align:right;font-size:8.4px;color:#1d2e6a;-webkit-text-stroke:0.25px #1d2e6a">4,2</div>
<div style="left:879px;top:376px;width:25px;height:10px;line-height:10px;text-align:right;font-size:8.4px;color:#a21e2c;-webkit-text-stroke:0.25px #a21e2c">6,3</div>
<div style="left:627px;top:396px;width:278px;height:1px;background:repeating-linear-gradient(90deg,#c4c4c4 0 1px,transparent 1px 3px)"></div>
<div style="left:633px;top:386px;height:10px;line-height:10px;transform:translateY(0.5px);font-size:8.35px;letter-spacing:0.07px;color:#1d2e6a;-webkit-text-stroke:0.2px #1d2e6a">Transa SGOT</div>
<div style="left:813px;top:386px;width:37px;height:10px;line-height:10px;overflow:hidden;display:flex;justify-content:flex-end;font-size:8.3px;color:#2a8a2a;-webkit-text-stroke:0.25px #2a8a2a"><span style="flex:none">UI/l</span></div>
<div style="left:852px;top:386px;width:25px;height:10px;line-height:10px;text-align:right;font-size:8.4px;color:#1d2e6a;-webkit-text-stroke:0.25px #1d2e6a">10</div>
<div style="left:879px;top:386px;width:25px;height:10px;line-height:10px;text-align:right;font-size:8.4px;color:#a21e2c;-webkit-text-stroke:0.25px #a21e2c">37</div>
<div style="left:627px;top:406px;width:278px;height:1px;background:repeating-linear-gradient(90deg,#c4c4c4 0 1px,transparent 1px 3px)"></div>
<div style="left:633px;top:396px;height:10px;line-height:10px;transform:translateY(0.5px);font-size:8.35px;letter-spacing:0.07px;color:#1d2e6a;-webkit-text-stroke:0.2px #1d2e6a">Transa SGPT</div>
<div style="left:813px;top:396px;width:37px;height:10px;line-height:10px;overflow:hidden;display:flex;justify-content:flex-end;font-size:8.3px;color:#2a8a2a;-webkit-text-stroke:0.25px #2a8a2a"><span style="flex:none">UI/l</span></div>
<div style="left:852px;top:396px;width:25px;height:10px;line-height:10px;text-align:right;font-size:8.4px;color:#1d2e6a;-webkit-text-stroke:0.25px #1d2e6a">10</div>
<div style="left:879px;top:396px;width:25px;height:10px;line-height:10px;text-align:right;font-size:8.4px;color:#a21e2c;-webkit-text-stroke:0.25px #a21e2c">41</div>
<div style="left:627px;top:416px;width:278px;height:1px;background:repeating-linear-gradient(90deg,#c4c4c4 0 1px,transparent 1px 3px)"></div>
<div style="left:633px;top:406px;height:10px;line-height:10px;transform:translateY(0.5px);font-size:8.35px;letter-spacing:0.07px;color:#1d2e6a;-webkit-text-stroke:0.2px #1d2e6a">TSH ultra Sensible</div>
<div style="left:813px;top:406px;width:37px;height:10px;line-height:10px;overflow:hidden;display:flex;justify-content:flex-end;font-size:8.3px;color:#2a8a2a;-webkit-text-stroke:0.25px #2a8a2a"><span style="flex:none">µUI/ml</span></div>
<div style="left:852px;top:406px;width:25px;height:10px;line-height:10px;text-align:right;font-size:8.4px;color:#1d2e6a;-webkit-text-stroke:0.25px #1d2e6a">0,3</div>
<div style="left:879px;top:406px;width:25px;height:10px;line-height:10px;text-align:right;font-size:8.4px;color:#a21e2c;-webkit-text-stroke:0.25px #a21e2c">4</div>
<div style="left:627px;top:426px;width:278px;height:1px;background:repeating-linear-gradient(90deg,#c4c4c4 0 1px,transparent 1px 3px)"></div>
<div style="left:633px;top:416px;height:10px;line-height:10px;transform:translateY(0.5px);font-size:8.35px;letter-spacing:0.07px;color:#1d2e6a;-webkit-text-stroke:0.2px #1d2e6a">MNI test</div>
<div style="left:852px;top:416px;width:25px;height:10px;line-height:10px;text-align:right;font-size:8.4px;color:#1d2e6a;-webkit-text-stroke:0.25px #1d2e6a">0</div>
<div style="left:879px;top:416px;width:25px;height:10px;line-height:10px;text-align:right;font-size:8.4px;color:#a21e2c;-webkit-text-stroke:0.25px #a21e2c">0</div>
<div style="left:747px;top:114px;width:1px;height:417px;background:repeating-linear-gradient(180deg,#6a78b8 0 1px,transparent 1px 3px)"></div>
<div style="left:812px;top:114px;width:1px;height:417px;background:repeating-linear-gradient(180deg,#e8907a 0 1px,transparent 1px 3px)"></div>
<div style="left:851px;top:114px;width:1px;height:417px;background:repeating-linear-gradient(180deg,#6fae6f 0 1px,transparent 1px 3px)"></div>
<div style="left:878px;top:114px;width:1px;height:417px;background:repeating-linear-gradient(180deg,#6fae6f 0 1px,transparent 1px 3px)"></div>
<div style="left:904px;top:114px;width:1px;height:417px;background:repeating-linear-gradient(180deg,#6fae6f 0 1px,transparent 1px 3px)"></div>
<div style="left:0px;top:532px;width:916px;height:25px;background:#e5e5e5"></div>
<div style="left:0px;top:532px;width:916px;height:11px;background:#dedede"></div>
<div style="left:0px;top:543px;width:916px;height:1px;background:#bdbdbd"></div>
<div style="left:0px;top:556px;width:916px;height:2px;background:#f4f4f4"></div>
<div style="left:326px;top:536px;width:105px;height:15px;background:linear-gradient(#a6a6a6,#999);border:1px solid #6e6e6e;border-radius:3px 0 0 3px"></div>
<svg style="left:328.7px;top:537.3px" width="12" height="11" viewBox="0 0 12 11"><rect x="0" y="0" width="11.3" height="10.8" fill="#f6f8fb"/><rect x="0" y="0.4" width="11.3" height="1.4" fill="#3b93e0"/><path d="M1 4.3 H6.5 M1 7.8 H6.5" stroke="#9a9a9a" stroke-width="1.3"/><path d="M8 9.4 L10.8 5" stroke="#e8b030" stroke-width="1.4"/><circle cx="10.9" cy="4.4" r="0.8" fill="#e03030"/></svg>
<div style="left:350.6px;top:537px;height:15px;line-height:15px;font-size:8.6px;color:#2b5bb8;-webkit-text-stroke:0.2px #2b5bb8">Texte & Documents</div>
<div style="left:430px;top:536px;width:161px;height:15px;background:linear-gradient(#ffffff,#f1f1f1);border:1px solid #9c9c9c;border-left:none;border-radius:0 3px 3px 0"></div>
<svg style="left:435px;top:538px" width="11" height="11" viewBox="0 0 11 11"><path d="M5.5 0.8 V10.2 M0.8 5.5 H10.2" stroke="#e8841a" stroke-width="2.6"/><path d="M5.5 1.5 V9.5 M1.5 5.5 H9.5" stroke="#ffb040" stroke-width="1.2"/></svg>
<div style="left:453px;top:537px;height:15px;line-height:15px;font-size:8.75px;color:#2b5bb8;-webkit-text-stroke:0.2px #2b5bb8">Ajouter des lignes de prescription</div>
<div style="left:2px;top:557px;width:620px;height:158px;background:#d5d5d5"></div>
<div style="left:4px;top:558px;width:617px;height:13px;background:#326883"></div>
<div style="left:7.5px;top:559px;height:13px;line-height:13px;font-size:8.9px;font-weight:bold;color:#fff">Texte libre de l'Examen</div>
<svg style="left:553px;top:563px" width="10" height="2"><rect width="10" height="1.5" fill="#fff"/></svg>
<div style="left:566.5px;top:558.5px;height:13px;line-height:13px;font-size:9.5px;font-family:Liberation Serif,serif;color:#fff">10</div>
<svg style="left:580px;top:559px" width="11" height="11" viewBox="0 0 11 11"><path d="M5.5 0.5 V10.5 M0.5 5.5 H10.5" stroke="#fff" stroke-width="1.4"/></svg>
<div style="left:607px;top:559px;width:11px;height:11px;background:#5892ad;border-radius:1px"></div>
<svg style="left:607px;top:559px" width="11" height="11" viewBox="0 0 11 11"><path d="M1.3 1 H7 V9.6 H1.3z" fill="#fff"/><path d="M4.2 2.6 Q3 2.6 3 4 Q3 5 4.2 5.2 Q5.2 5.5 5.2 6.4 Q5.2 7.6 4 7.6" stroke="#5892ad" stroke-width="0.8" fill="none"/><path d="M5.5 10 L10.2 5.2" stroke="#fff" stroke-width="0.9"/></svg>
<div style="left:4px;top:571px;width:617px;height:2px;background:#9d9d9d"></div>
<div style="left:3px;top:573px;width:618px;height:141px;background:#fff;border-left:2px solid #b0b0b0;border-bottom:1px solid #d4d4d4"></div>
<div style="left:609px;top:573px;width:11px;height:140px;background:linear-gradient(90deg,#f3f3f3,#fff 50%,#f6f6f6)"></div>
<div style="left:6px;top:574px;height:11px;line-height:11px;font-size:7.6px;color:#2555b0;letter-spacing:-0.1px;-webkit-text-stroke:0.2px #2555b0">Résultats ok RAS</div>
<div style="left:622px;top:557px;width:2px;height:158px;background:#a0a0a0"></div>
<div style="left:624px;top:557px;width:292px;height:158px;background:#d7d7d7"></div>
<div style="left:625px;top:558px;width:289px;height:13px;background:#326883"></div>
<div style="left:718.9px;top:559px;height:13px;line-height:13px;font-size:8.6px;color:#fff;-webkit-text-stroke:0.2px #fff">IMAGES et Pièces-Jointes</div>
<div style="left:886px;top:559px;width:11px;height:11px;background:#5892ad;border-radius:1px"></div>
<svg style="left:886px;top:559px" width="11" height="11" viewBox="0 0 11 11"><path d="M0.8 4 H3 L4 2.3 H7 L8 4 H10.2 V10 H0.8z" fill="#fff"/><circle cx="5.5" cy="6.8" r="2" fill="#5892ad"/><path d="M4.3 2.3 Q5.5 0.6 6.7 2.3" stroke="#fff" stroke-width="0.9" fill="none"/></svg>
<div style="left:900px;top:559px;width:11px;height:11px;background:#5892ad;border-radius:1px"></div>
<svg style="left:900px;top:559px" width="11" height="11" viewBox="0 0 11 11"><path d="M0.8 0.8 H8 L9.6 2.4 V6.5 L6.5 9.6 H0.8z" fill="#fff"/><rect x="2.6" y="1.2" width="4" height="2.6" fill="#5892ad"/><rect x="2.2" y="5.6" width="3.6" height="3.2" fill="#5892ad"/><path d="M6.4 6.4 L10.2 10.2 M10.2 7.6 V10.2 H7.6" stroke="#fff" stroke-width="1" fill="none"/></svg>
<div style="left:625px;top:574px;width:288px;height:124px;background:#fff"></div>
<div style="left:625px;top:574px;width:288px;height:1px;background:repeating-linear-gradient(90deg,#8a8a8a 0 2px,transparent 2px 3px)"></div>
<div style="left:625px;top:697px;width:288px;height:1px;background:repeating-linear-gradient(90deg,#8a8a8a 0 2px,transparent 2px 3px)"></div>
<div style="left:625px;top:574px;width:1px;height:124px;background:repeating-linear-gradient(180deg,#8a8a8a 0 2px,transparent 2px 3px)"></div>
<div style="left:912px;top:574px;width:1px;height:124px;background:repeating-linear-gradient(180deg,#8a8a8a 0 2px,transparent 2px 3px)"></div>
<div style="left:625px;top:700px;width:289px;height:13px;background:#326883"></div>
<div style="left:625px;top:700.5px;width:289px;height:13px;line-height:13px;text-align:center;font-size:8.4px;color:#fff;-webkit-text-stroke:0.2px #fff">Pas de PJ – Vous pouvez "Coller" une Image</div>
<div style="left:913px;top:557px;width:3px;height:158px;background:linear-gradient(90deg,#c4c4c4,#9a9a9a 50%,#d0d0d0)"></div>
<div style="left:1px;top:543px;width:1px;height:172px;background:#b4b4b4"></div>
<div style="left:737px;top:586px;width:151px;height:20px;background:#fff;border-radius:4px;box-shadow:0 3px 7px rgba(0,0,0,0.35)"></div>
<div style="left:738px;top:590px;width:149px;height:13px;background:linear-gradient(#5a88f4,#3f6fee);"></div>
<div style="left:738px;top:590px;width:149px;height:13px;line-height:13px;text-align:center;font-size:11px;color:#fff;-webkit-text-stroke:0.3px #fff">Importer un Document...</div>
<div style="left:0px;top:714px;width:916px;height:3px;background:#a9a9a9"></div>
<div style="left:0px;top:717px;width:916px;height:2px;background:#d4d4d4"></div>
<div style="left:0px;top:719px;width:916px;height:13px;background:#ebeded"></div>
<div style="left:902px;top:720px;width:1px;height:12px;background:#9a9a9a"></div>
<svg style="left:903px;top:719px" width="12" height="12" viewBox="0 0 12 12"><path d="M11 2 L2 11 M11 6 L6 11 M11 10 L10 11" stroke="#999" stroke-width="1"/></svg>
<div style="left:835.0px;top:530.5px;width:47px;height:47px;border-radius:50%;background:#f4a104;color:#fff;font-size:22px;font-weight:bold;text-align:center;line-height:45px">6</div>
<div style="left:731.5px;top:620.8px;width:47px;height:47px;border-radius:50%;background:#f4a104;color:#fff;font-size:22px;font-weight:bold;text-align:center;line-height:45px">7</div>
<svg style="left:3.65px;top:35.8px" width="23" height="23" viewBox="0 0 23 23"><g fill="none" stroke="#fff" stroke-width="1.5" stroke-linecap="round"><path d="M5.2 2.6 Q2.2 2.4 1.8 5.2 Q1.8 9.5 5.5 11.8 Q7.5 12.8 8.7 12.6"/><path d="M10 2.6 Q13.6 2.4 14 5.2 Q14 9.5 11.2 11.8 Q10 12.6 8.7 12.6"/><path d="M8.7 12.6 V17.5 Q8.7 20.3 11.2 20.3 Q13.7 20.3 13.7 17.5 V12.8 Q13.7 10.6 16 10.6 Q18.4 10.6 18.4 13 V15"/><circle cx="18.4" cy="17.7" r="2.4"/></g><path d="M4.5 1.6 h1.8 v2.2 h-1.8z M9 1.6 h1.8 v2.2 h-1.8z" fill="#fff"/></svg>
<svg style="left:30.9px;top:35.8px" width="23" height="23" viewBox="0 0 23 23"><rect x="2.9" y="3.1" width="5.9" height="1.7" fill="#fff"/><path d="M2.2 6.5 H8.6 Q9.6 6.5 9.6 7.6 V18.4 Q9.6 19.3 8.6 19.3 H2.2 Q1.2 19.3 1.2 18.4 V7.6 Q1.2 6.5 2.2 6.5z" fill="#fff"/><path d="M2.9 9.6 H4.8 Q6.6 9.6 6.6 13.3 Q6.6 17 4.8 17 H2.9z" fill="#5892ad"/><g transform="translate(15.6 12.7) rotate(-42)"><rect x="-7.6" y="-2.5" width="15.2" height="5" rx="2.5" fill="#fff"/><path d="M0 -1.6 H4.9 A1.6 1.6 0 0 1 4.9 1.6 H0z" fill="#5892ad"/></g></svg>
<svg style="left:58px;top:35.8px" width="23" height="23" viewBox="0 0 23 23"><path d="M2.1 9.4 L11.2 3.5 L20.3 9.4 V19.2 H2.1z" fill="#fff"/><path d="M4.7 10.3 H17.4 L11.2 13.9z" fill="#5892ad"/><path d="M4.7 17.7 L8.8 14.7 M13.6 14.7 L17.4 17.7" stroke="#5892ad" stroke-width="0.9"/></svg>
<svg style="left:85.2px;top:35.8px" width="23" height="23" viewBox="0 0 23 23"><path d="M9.2 2 Q11.5 3.2 13.9 2 L13.4 3.6 Q11.5 4.4 9.7 3.6z M9.2 4.8 Q11.5 6 13.9 4.8 L13.4 7 Q11.5 7.8 9.7 7z" fill="#fff"/><path d="M3.3 9.5 Q4.2 7 7.2 7.4 Q9.8 8 11.5 9 Q13.2 8 15.8 7.4 Q18.8 7 19.7 9.5 Q20 12.5 17.5 14.6 Q15.5 15.6 13.8 14.6 L12.2 15.8 H10.8 L9.2 14.6 Q7.5 15.6 5.5 14.6 Q3 12.5 3.3 9.5z" fill="#fff"/><path d="M9.6 11.2 Q10.6 10 11.5 11 Q12.4 10 13.4 11.2 Q13.2 12.6 11.5 13.6 Q9.8 12.6 9.6 11.2z" fill="#5892ad"/><path d="M1.6 14.6 H5.4 V16.3 L4.6 16.5 V20.6 H2.8 V16.5 L1.6 16.3z M17.6 14.6 H21.4 V16.3 L20.2 16.5 V20.6 H18.4 V16.5 L17.6 16.3z" fill="#fff"/></svg>
<svg style="left:112.4px;top:35.8px" width="23" height="23" viewBox="0 0 23 23"><path d="M16.5 7.7 Q14.5 5 9.5 5.4" stroke="#fff" stroke-width="1.6" fill="none"/><path d="M6.2 5.8 L9.6 3.2 L10 7.6z" fill="#fff"/><text x="11.5" y="18.2" text-anchor="middle" font-family="Liberation Sans" font-weight="bold" font-size="8.6" fill="#fff" textLength="20" lengthAdjust="spacingAndGlyphs">ATCD</text></svg>
<svg style="left:139.8px;top:35.8px" width="23" height="23" viewBox="0 0 23 23"><path d="M1.2 8.6 L8.5 4.1 L16 8.6 V16 H1.2z" fill="#fff"/><path d="M3.2 9.4 H14 L8.6 12.4z" fill="#5892ad"/><path d="M3 15 L6.4 12.8 M10.8 12.8 L14.2 15" stroke="#5892ad" stroke-width="0.8"/><path d="M12.7 18.6 L13.2 16.6 L20 10 L21.2 11.2 L14.5 17.8z" fill="#fff" stroke="#5892ad" stroke-width="0.5"/></svg>
<svg style="left:167.2px;top:35.8px" width="23" height="23" viewBox="0 0 23 23"><path d="M11.5 14.4 H2.4 V2.4 H20 V12" stroke="#fff" stroke-width="1.2" fill="none"/><path d="M4.7 5.9 H17.7 M4.7 8.2 H17.7" stroke="#d9e6ee" stroke-width="0.9"/><circle cx="15.3" cy="13.3" r="2.6" stroke="#fff" stroke-width="1.3" fill="#5892ad"/><path d="M12.6 15.6 L11.5 20.9 L12.9 19.8 L13.9 20.8 L14.6 16.4z M16 16.4 L16.8 20.8 L17.8 19.8 L19.6 20.9 L18 15.6z" fill="#fff"/></svg>
<svg style="left:194px;top:35.8px" width="23" height="23" viewBox="0 0 23 23"><path d="M2.8 4.6 Q6.5 3.8 10.8 4.9 V15.4 Q6.5 14.6 2.8 15.3z M12.2 4.9 Q16.5 3.8 20.4 4.6 V15.3 Q16.5 14.6 12.2 15.4z" fill="#fff"/><path d="M1.8 6 V16.2 H10.8 M21.4 6 V16.2 H12.2" stroke="#cfe0ea" stroke-width="0.8" fill="none"/><path d="M14 15.2 H17 V18.9 L15.5 17.8 L14 18.9z" fill="#fff"/></svg>
<svg style="left:221px;top:35.7px" width="23" height="23" viewBox="0 0 23 23"><circle cx="6.9" cy="9.5" r="2.1" fill="#fff"/><path d="M3.9 15.2 Q4.2 12 6.9 12 Q9.7 12 10 15.2z" fill="#fff"/><circle cx="16" cy="9.5" r="2.1" fill="#fff"/><path d="M13 15.2 Q13.3 12 16 12 Q18.8 12 19.1 15.2z" fill="#fff"/><path d="M15.8 6 Q14 4.2 9.5 4.9" stroke="#fff" stroke-width="1.4" fill="none"/><path d="M6.4 5.2 L9.4 2.8 L9.9 7z" fill="#fff"/><path d="M6.6 17 Q8.5 19.2 13 18.6" stroke="#fff" stroke-width="1.4" fill="none"/><path d="M16.2 18.4 L13.2 20.8 L12.7 16.6z" fill="#fff"/></svg>
<svg style="left:781.5px;top:35.8px" width="23" height="23" viewBox="0 0 23 23"><rect x="7.4" y="2.1" width="8.8" height="3.8" fill="#fff"/><rect x="1.8" y="7.7" width="18.8" height="8.8" rx="1.3" fill="#fff"/><circle cx="5.3" cy="10.3" r="0.8" fill="#5892ad"/><rect x="5.6" y="13.6" width="11.8" height="6.4" fill="#fff"/><rect x="7.7" y="14.4" width="7.9" height="4.8" fill="#5892ad"/></svg>
<svg style="left:808.9px;top:35.8px" width="23" height="23" viewBox="0 0 23 23"><path d="M8.2 4.8 Q8.2 1.6 11 1.6 Q13.8 1.6 13.8 4.8" stroke="#fff" stroke-width="1.3" fill="none"/><path d="M3.2 7.4 L5.6 4.6 H16.2 L18.6 7.4z" fill="#fff"/><path d="M4.1 8.6 H17.4 L16.4 20.9 H5.1z" fill="#fff"/><path d="M6.6 10.4 L7.1 19.3 M10.8 10.4 V19.3 M15 10.4 L14.5 19.3" stroke="#5892ad" stroke-width="1.1" stroke-linecap="round"/></svg>
<svg style="left:836px;top:36px" width="23" height="23" viewBox="0 0 23 23"><rect x="2.1" y="1.6" width="13" height="17" fill="#fff"/><path d="M6.3 5.4 H17.2 L21.6 9.8 V20.7 H6.3z" fill="#5892ad"/><path d="M7 6.1 H16.8 L20.9 10.2 V20 H7z" fill="#fff"/><path d="M16.8 6.1 V10.2 H20.9" stroke="#5892ad" stroke-width="0.7" fill="none"/><path d="M13.7 11.6 V16.6 M11.2 14.1 H16.2" stroke="#5892ad" stroke-width="1.4"/></svg>
<svg style="left:863px;top:36px" width="23" height="23" viewBox="0 0 23 23"><path d="M3.1 2.5 H12 L17 7.5 V17.3 H3.1z" fill="#fff"/><path d="M12 2.5 V7.5 H17" stroke="#5892ad" stroke-width="0.7" fill="none"/><path d="M16.1 11.6 V22 M10.9 16.8 H21.3" stroke="#5892ad" stroke-width="4"/><path d="M16.1 12.8 V20.8 M12.1 16.8 H20.1" stroke="#fff" stroke-width="1.8"/></svg>
<svg style="left:890.2px;top:36px" width="23" height="23" viewBox="0 0 23 23"><path d="M17.8 7.4 Q16 3.6 10 4.2" stroke="#fff" stroke-width="1.6" fill="none"/><path d="M6 4.5 L10.2 1.4 L10.6 7.4z" fill="#fff"/><path d="M4.2 8.8 H9.4 L10.2 10 H19 V20 H4.2z" fill="#fff"/><circle cx="11.8" cy="13.6" r="1.3" fill="#5892ad"/><path d="M9.6 18.4 Q9.8 15.2 11.8 15.2 Q13.8 15.2 14 18.4z" fill="#5892ad"/></svg>
<svg style="left:630px;top:1px" width="15" height="14" viewBox="0 0 15 14"><rect x="0.3" y="0.3" width="14.4" height="13.4" rx="2" fill="#4c9b63"/><rect x="0.3" y="7" width="14.4" height="6.7" rx="2" fill="#3d8a52"/><text x="7.5" y="6.6" text-anchor="middle" font-family="Liberation Sans" font-size="5" font-weight="bold" fill="#e8f4ec">DMP</text><rect x="2" y="9" width="11" height="0.8" fill="#dfe"/><rect x="2" y="9" width="1" height="2" fill="#e33"/></svg>
<svg style="left:652px;top:1px" width="12" height="12" viewBox="0 0 12 12"><rect x="0.5" y="0.5" width="11" height="11" rx="2.2" fill="#b2dc2a" stroke="#e07a5a" stroke-width="0.8"/><path d="M4.3 3.2 L8.6 6 L4.3 8.8z" fill="#fff"/></svg>
<svg style="left:669px;top:0px" width="16" height="15" viewBox="0 0 16 15"><rect x="1" y="0" width="6" height="6" fill="#c6c6c6"/><rect x="1" y="8" width="6" height="6" fill="#3d9be0"/><rect x="9" y="7.5" width="6" height="6.5" fill="#8c8c8c"/><path d="M10 3 L12.5 0.5 L15 3 L12.5 5.5z" fill="none" stroke="#8fb8d8" stroke-width="0.8"/></svg>
<svg style="left:692px;top:1px" width="13" height="13" viewBox="0 0 13 13"><path d="M2.2 4.2 A5 5 0 1 1 1.8 7.5" stroke="#777" stroke-width="1.3" fill="none"/><path d="M0.2 3.2 L3.6 3.2 L2.4 6z" fill="#777"/><path d="M6.8 3.5 V6.8 L8.8 8.2" stroke="#777" stroke-width="1.1" fill="none"/></svg>
<svg style="left:716px;top:2px" width="7" height="11" viewBox="0 0 7 11"><path d="M1 3 L5.5 7.5 L3.2 9.8 V1 L5.5 3.3 L1 8" stroke="#1a1a1a" stroke-width="1.1" fill="none"/></svg>
<svg style="left:733px;top:3px" width="17" height="10" viewBox="0 0 17 10"><path d="M0.8 3 Q8.5 -2.5 16.2 3 L8.5 9.4z" stroke="#1a1a1a" stroke-width="1.1" fill="none" stroke-linejoin="round"/></svg>
<svg style="left:758px;top:4px" width="9" height="8" viewBox="0 0 9 8"><path d="M4.5 0.3 L8.6 4.6 H0.4z" fill="#1a1a1a"/><rect x="0.4" y="6" width="8.2" height="1.5" fill="#1a1a1a"/></svg>
<svg style="left:777px;top:2px" width="14" height="11" viewBox="0 0 14 11"><path d="M0.5 3.5 H3 L6.5 0.5 V10.5 L3 7.5 H0.5z" fill="#1a1a1a"/><path d="M8 3.5 Q9.3 5.5 8 7.5 M9.8 2.2 Q12 5.5 9.8 8.8 M11.6 0.9 Q14.6 5.5 11.6 10.1" stroke="#1a1a1a" stroke-width="1.1" fill="none"/></svg>
<svg style="left:865px;top:3px" width="10" height="10" viewBox="0 0 10 10"><circle cx="4" cy="4" r="3.1" stroke="#1a1a1a" stroke-width="1.3" fill="none"/><path d="M6.3 6.3 L9.5 9.5" stroke="#1a1a1a" stroke-width="1.6"/></svg>
<svg style="left:886px;top:2px" width="16" height="11" viewBox="0 0 16 11"><g fill="#1a1a1a"><rect x="0.5" y="0.5" width="2" height="2"/><rect x="0.5" y="4.5" width="2" height="2"/><rect x="0.5" y="8.5" width="2" height="2"/><rect x="4" y="0.5" width="11.5" height="2"/><rect x="4" y="4.5" width="10" height="2"/><rect x="4" y="8.5" width="11.5" height="2"/></g></svg></body></html>
